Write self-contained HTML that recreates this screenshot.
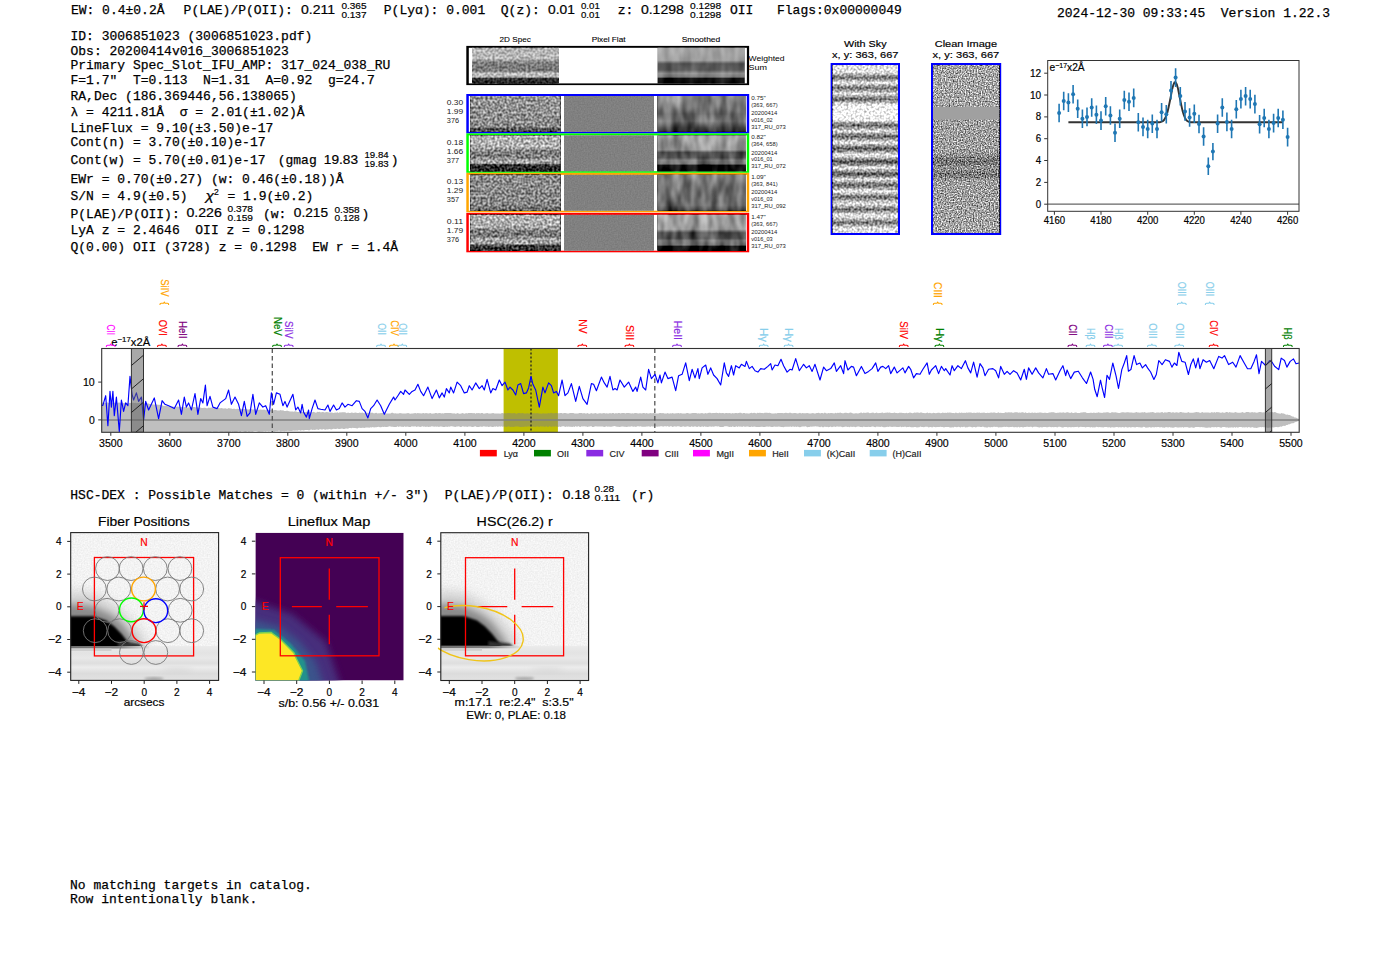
<!DOCTYPE html><html><head><meta charset="utf-8"><style>html,body{margin:0;padding:0;background:#fff;width:1400px;height:953px;overflow:hidden}svg{display:block} text{white-space:pre}</style></head><body>
<svg xml:space="preserve" width="1400" height="953" viewBox="0 0 1400 953">
<rect width="1400" height="953" fill="#fff"/>
<text x="70.9" y="14.0" font-family="'Liberation Mono', monospace" font-size="13.6" fill="#000" textLength="93.6" lengthAdjust="spacingAndGlyphs"  stroke="#000" stroke-width="0.25">EW: 0.4±0.2Å</text>
<text x="183.6" y="14.0" font-family="'Liberation Mono', monospace" font-size="13.6" fill="#000" textLength="109.2" lengthAdjust="spacingAndGlyphs"  stroke="#000" stroke-width="0.25">P(LAE)/P(OII):</text>
<text x="301.0" y="13.8" font-family="'Liberation Sans', sans-serif" font-size="12.6" fill="#000" text-anchor="start" textLength="34.0" lengthAdjust="spacingAndGlyphs"   stroke="#000" stroke-width="0.2">0.211</text>
<text x="341.4" y="8.7" font-family="'Liberation Sans', sans-serif" font-size="9.2" fill="#000" text-anchor="start" textLength="25.1" lengthAdjust="spacingAndGlyphs"   stroke="#000" stroke-width="0.18">0.365</text>
<text x="341.4" y="17.7" font-family="'Liberation Sans', sans-serif" font-size="9.2" fill="#000" text-anchor="start" textLength="25.1" lengthAdjust="spacingAndGlyphs"   stroke="#000" stroke-width="0.18">0.137</text>
<text x="383.8" y="14.0" font-family="'Liberation Mono', monospace" font-size="13.6" fill="#000" textLength="101.4" lengthAdjust="spacingAndGlyphs"  stroke="#000" stroke-width="0.25">P(Lyα): 0.001</text>
<text x="500.8" y="14.0" font-family="'Liberation Mono', monospace" font-size="13.6" fill="#000" textLength="39.0" lengthAdjust="spacingAndGlyphs"  stroke="#000" stroke-width="0.25">Q(z):</text>
<text x="548.0" y="13.8" font-family="'Liberation Sans', sans-serif" font-size="12.6" fill="#000" text-anchor="start" textLength="26.8" lengthAdjust="spacingAndGlyphs"   stroke="#000" stroke-width="0.2">0.01</text>
<text x="581.0" y="8.7" font-family="'Liberation Sans', sans-serif" font-size="9.2" fill="#000" text-anchor="start" textLength="18.8" lengthAdjust="spacingAndGlyphs"   stroke="#000" stroke-width="0.18">0.01</text>
<text x="581.0" y="17.7" font-family="'Liberation Sans', sans-serif" font-size="9.2" fill="#000" text-anchor="start" textLength="18.8" lengthAdjust="spacingAndGlyphs"   stroke="#000" stroke-width="0.18">0.01</text>
<text x="617.7" y="14.0" font-family="'Liberation Mono', monospace" font-size="13.6" fill="#000" textLength="15.6" lengthAdjust="spacingAndGlyphs"  stroke="#000" stroke-width="0.25">z:</text>
<text x="640.9" y="13.8" font-family="'Liberation Sans', sans-serif" font-size="12.6" fill="#000" text-anchor="start" textLength="42.9" lengthAdjust="spacingAndGlyphs"   stroke="#000" stroke-width="0.2">0.1298</text>
<text x="690.0" y="8.7" font-family="'Liberation Sans', sans-serif" font-size="9.2" fill="#000" text-anchor="start" textLength="31.2" lengthAdjust="spacingAndGlyphs"   stroke="#000" stroke-width="0.18">0.1298</text>
<text x="690.0" y="17.7" font-family="'Liberation Sans', sans-serif" font-size="9.2" fill="#000" text-anchor="start" textLength="31.2" lengthAdjust="spacingAndGlyphs"   stroke="#000" stroke-width="0.18">0.1298</text>
<text x="730.0" y="14.0" font-family="'Liberation Mono', monospace" font-size="13.6" fill="#000" textLength="23.4" lengthAdjust="spacingAndGlyphs"  stroke="#000" stroke-width="0.25">OII</text>
<text x="777.0" y="14.0" font-family="'Liberation Mono', monospace" font-size="13.6" fill="#000" textLength="124.8" lengthAdjust="spacingAndGlyphs"  stroke="#000" stroke-width="0.25">Flags:0x00000049</text>
<text x="1057.0" y="17.0" font-family="'Liberation Mono', monospace" font-size="13.6" fill="#000" textLength="273.0" lengthAdjust="spacingAndGlyphs"  stroke="#000" stroke-width="0.25">2024-12-30 09:33:45  Version 1.22.3</text>
<text x="70.5" y="40.4" font-family="'Liberation Mono', monospace" font-size="13.6" fill="#000" textLength="241.8" lengthAdjust="spacingAndGlyphs"  stroke="#000" stroke-width="0.25">ID: 3006851023 (3006851023.pdf)</text>
<text x="70.5" y="55.0" font-family="'Liberation Mono', monospace" font-size="13.6" fill="#000" textLength="218.4" lengthAdjust="spacingAndGlyphs"  stroke="#000" stroke-width="0.25">Obs: 20200414v016_3006851023</text>
<text x="70.5" y="69.3" font-family="'Liberation Mono', monospace" font-size="13.6" fill="#000" textLength="319.8" lengthAdjust="spacingAndGlyphs"  stroke="#000" stroke-width="0.25">Primary Spec_Slot_IFU_AMP: 317_024_038_RU</text>
<text x="70.5" y="84.3" font-family="'Liberation Mono', monospace" font-size="13.6" fill="#000" textLength="304.2" lengthAdjust="spacingAndGlyphs"  stroke="#000" stroke-width="0.25">F=1.7"  T=0.113  N=1.31  A=0.92  g=24.7</text>
<text x="70.5" y="99.6" font-family="'Liberation Mono', monospace" font-size="13.6" fill="#000" textLength="226.2" lengthAdjust="spacingAndGlyphs"  stroke="#000" stroke-width="0.25">RA,Dec (186.369446,56.138065)</text>
<text x="70.5" y="116.1" font-family="'Liberation Mono', monospace" font-size="13.6" fill="#000" textLength="234.0" lengthAdjust="spacingAndGlyphs"  stroke="#000" stroke-width="0.25">λ = 4211.81Å  σ = 2.01(±1.02)Å</text>
<text x="70.5" y="131.5" font-family="'Liberation Mono', monospace" font-size="13.6" fill="#000" textLength="202.8" lengthAdjust="spacingAndGlyphs"  stroke="#000" stroke-width="0.25">LineFlux = 9.10(±3.50)e-17</text>
<text x="70.5" y="146.2" font-family="'Liberation Mono', monospace" font-size="13.6" fill="#000" textLength="195.0" lengthAdjust="spacingAndGlyphs"  stroke="#000" stroke-width="0.25">Cont(n) = 3.70(±0.10)e-17</text>
<text x="70.5" y="164.1" font-family="'Liberation Mono', monospace" font-size="13.6" fill="#000" textLength="195.0" lengthAdjust="spacingAndGlyphs"  stroke="#000" stroke-width="0.25">Cont(w) = 5.70(±0.01)e-17</text>
<text x="277.7" y="164.1" font-family="'Liberation Mono', monospace" font-size="13.6" fill="#000" textLength="39.0" lengthAdjust="spacingAndGlyphs"  stroke="#000" stroke-width="0.25">(gmag</text>
<text x="323.8" y="163.9" font-family="'Liberation Sans', sans-serif" font-size="12.6" fill="#000" text-anchor="start" textLength="34.2" lengthAdjust="spacingAndGlyphs"   stroke="#000" stroke-width="0.2">19.83</text>
<text x="364.5" y="158.4" font-family="'Liberation Sans', sans-serif" font-size="9.2" fill="#000" text-anchor="start" textLength="24.1" lengthAdjust="spacingAndGlyphs"   stroke="#000" stroke-width="0.18">19.84</text>
<text x="364.5" y="167.0" font-family="'Liberation Sans', sans-serif" font-size="9.2" fill="#000" text-anchor="start" textLength="24.1" lengthAdjust="spacingAndGlyphs"   stroke="#000" stroke-width="0.18">19.83</text>
<text x="390.8" y="164.1" font-family="'Liberation Mono', monospace" font-size="13.6" fill="#000" textLength="7.8" lengthAdjust="spacingAndGlyphs"  stroke="#000" stroke-width="0.25">)</text>
<text x="70.5" y="182.5" font-family="'Liberation Mono', monospace" font-size="13.6" fill="#000" textLength="273.0" lengthAdjust="spacingAndGlyphs"  stroke="#000" stroke-width="0.25">EWr = 0.70(±0.27) (w: 0.46(±0.18))Å</text>
<text x="70.5" y="200.1" font-family="'Liberation Mono', monospace" font-size="13.6" fill="#000" textLength="117.0" lengthAdjust="spacingAndGlyphs"  stroke="#000" stroke-width="0.25">S/N = 4.9(±0.5)</text>
<text x="205.5" y="200.1" font-family="'Liberation Sans', sans-serif" font-size="12.0" fill="#000" text-anchor="start" textLength="8.5" lengthAdjust="spacingAndGlyphs" font-style="italic"  stroke="#000" stroke-width="0.2">χ</text>
<text x="214.0" y="195.2" font-family="'Liberation Sans', sans-serif" font-size="9.2" fill="#000" text-anchor="start" textLength="4.8" lengthAdjust="spacingAndGlyphs"   stroke="#000" stroke-width="0.18">2</text>
<text x="227.5" y="200.1" font-family="'Liberation Mono', monospace" font-size="13.6" fill="#000" textLength="85.8" lengthAdjust="spacingAndGlyphs"  stroke="#000" stroke-width="0.25">= 1.9(±0.2)</text>
<text x="70.5" y="217.7" font-family="'Liberation Mono', monospace" font-size="13.6" fill="#000" textLength="109.2" lengthAdjust="spacingAndGlyphs"  stroke="#000" stroke-width="0.25">P(LAE)/P(OII):</text>
<text x="186.4" y="217.4" font-family="'Liberation Sans', sans-serif" font-size="12.6" fill="#000" text-anchor="start" textLength="35.4" lengthAdjust="spacingAndGlyphs"   stroke="#000" stroke-width="0.2">0.226</text>
<text x="227.6" y="212.0" font-family="'Liberation Sans', sans-serif" font-size="9.2" fill="#000" text-anchor="start" textLength="25.4" lengthAdjust="spacingAndGlyphs"   stroke="#000" stroke-width="0.18">0.378</text>
<text x="227.6" y="220.9" font-family="'Liberation Sans', sans-serif" font-size="9.2" fill="#000" text-anchor="start" textLength="25.4" lengthAdjust="spacingAndGlyphs"   stroke="#000" stroke-width="0.18">0.159</text>
<text x="263.0" y="217.7" font-family="'Liberation Mono', monospace" font-size="13.6" fill="#000" textLength="23.4" lengthAdjust="spacingAndGlyphs"  stroke="#000" stroke-width="0.25">(w:</text>
<text x="293.8" y="217.4" font-family="'Liberation Sans', sans-serif" font-size="12.6" fill="#000" text-anchor="start" textLength="34.2" lengthAdjust="spacingAndGlyphs"   stroke="#000" stroke-width="0.2">0.215</text>
<text x="334.5" y="212.6" font-family="'Liberation Sans', sans-serif" font-size="9.2" fill="#000" text-anchor="start" textLength="25.2" lengthAdjust="spacingAndGlyphs"   stroke="#000" stroke-width="0.18">0.358</text>
<text x="334.5" y="221.2" font-family="'Liberation Sans', sans-serif" font-size="9.2" fill="#000" text-anchor="start" textLength="25.2" lengthAdjust="spacingAndGlyphs"   stroke="#000" stroke-width="0.18">0.128</text>
<text x="361.6" y="217.7" font-family="'Liberation Mono', monospace" font-size="13.6" fill="#000" textLength="7.8" lengthAdjust="spacingAndGlyphs"  stroke="#000" stroke-width="0.25">)</text>
<text x="70.5" y="234.3" font-family="'Liberation Mono', monospace" font-size="13.6" fill="#000" textLength="234.0" lengthAdjust="spacingAndGlyphs"  stroke="#000" stroke-width="0.25">LyA z = 2.4646  OII z = 0.1298</text>
<text x="70.5" y="250.8" font-family="'Liberation Mono', monospace" font-size="13.6" fill="#000" textLength="327.6" lengthAdjust="spacingAndGlyphs"  stroke="#000" stroke-width="0.25">Q(0.00) OII (3728) z = 0.1298  EW r = 1.4Å</text>
<text x="70.3" y="498.9" font-family="'Liberation Mono', monospace" font-size="13.6" fill="#000" textLength="483.6" lengthAdjust="spacingAndGlyphs"  stroke="#000" stroke-width="0.25">HSC-DEX : Possible Matches = 0 (within +/- 3")  P(LAE)/P(OII):</text>
<text x="562.5" y="498.7" font-family="'Liberation Sans', sans-serif" font-size="12.6" fill="#000" text-anchor="start" textLength="27.5" lengthAdjust="spacingAndGlyphs"   stroke="#000" stroke-width="0.2">0.18</text>
<text x="594.6" y="492.0" font-family="'Liberation Sans', sans-serif" font-size="9.2" fill="#000" text-anchor="start" textLength="19.5" lengthAdjust="spacingAndGlyphs"   stroke="#000" stroke-width="0.18">0.28</text>
<text x="594.6" y="501.0" font-family="'Liberation Sans', sans-serif" font-size="9.2" fill="#000" text-anchor="start" textLength="25.7" lengthAdjust="spacingAndGlyphs"   stroke="#000" stroke-width="0.18">0.111</text>
<text x="631.0" y="498.9" font-family="'Liberation Mono', monospace" font-size="13.6" fill="#000" textLength="23.4" lengthAdjust="spacingAndGlyphs"  stroke="#000" stroke-width="0.25">(r)</text>
<text x="70.0" y="888.6" font-family="'Liberation Mono', monospace" font-size="13.6" fill="#000" textLength="241.8" lengthAdjust="spacingAndGlyphs"  stroke="#000" stroke-width="0.25">No matching targets in catalog.</text>
<text x="70.0" y="903.4" font-family="'Liberation Mono', monospace" font-size="13.6" fill="#000" textLength="187.2" lengthAdjust="spacingAndGlyphs"  stroke="#000" stroke-width="0.25">Row intentionally blank.</text>
<clipPath id="cpS"><rect x="101.7" y="348.5" width="1197.5" height="83.80000000000001"/></clipPath>
<g clip-path="url(#cpS)">
<rect x="503.6" y="348.5" width="54.299999999999955" height="83.80000000000001" fill="#bfbf00"/>
<path d="M99.0,402.7 L100.2,402.5 L101.4,402.7 L102.5,402.5 L103.7,402.5 L104.9,403.0 L106.1,403.1 L107.3,402.3 L108.4,402.9 L109.6,402.9 L110.8,402.3 L112.0,402.7 L113.2,402.4 L114.3,402.8 L115.5,402.7 L116.7,403.1 L117.9,402.7 L119.1,402.5 L120.2,402.8 L121.4,402.7 L122.6,402.7 L123.8,403.3 L125.0,402.7 L126.1,402.9 L127.3,403.1 L128.5,403.4 L129.7,402.7 L130.9,403.0 L132.0,402.8 L133.2,402.7 L134.4,402.9 L135.6,402.7 L136.8,403.2 L137.9,402.9 L139.1,403.2 L140.3,402.8 L141.5,402.8 L142.7,403.6 L143.8,403.6 L145.0,403.5 L146.2,402.8 L147.4,403.5 L148.6,403.5 L149.7,404.0 L150.9,403.9 L152.1,404.2 L153.3,404.4 L154.5,404.4 L155.6,404.6 L156.8,404.4 L158.0,404.8 L159.2,404.7 L160.4,405.0 L161.5,405.0 L162.7,405.5 L163.9,406.1 L165.1,405.7 L166.3,405.7 L167.4,406.0 L168.6,406.4 L169.8,406.5 L171.0,407.0 L172.2,406.4 L173.4,406.7 L174.5,407.0 L175.7,407.3 L176.9,406.6 L178.1,406.5 L179.3,407.3 L180.4,406.7 L181.6,407.1 L182.8,407.4 L184.0,407.3 L185.2,406.9 L186.3,406.9 L187.5,407.7 L188.7,407.2 L189.9,407.7 L191.1,407.2 L192.2,407.5 L193.4,407.1 L194.6,407.0 L195.8,407.5 L197.0,407.1 L198.1,407.7 L199.3,408.0 L200.5,407.6 L201.7,408.1 L202.9,408.0 L204.0,407.8 L205.2,407.7 L206.4,408.2 L207.6,408.3 L208.8,407.6 L209.9,408.1 L211.1,407.6 L212.3,407.7 L213.5,408.2 L214.7,408.1 L215.8,408.1 L217.0,408.1 L218.2,408.1 L219.4,408.2 L220.6,408.2 L221.7,407.9 L222.9,408.4 L224.1,408.5 L225.3,408.2 L226.5,408.7 L227.6,408.7 L228.8,408.1 L230.0,408.6 L231.2,408.6 L232.4,409.1 L233.5,408.8 L234.7,408.7 L235.9,409.2 L237.1,408.7 L238.3,408.7 L239.4,409.3 L240.6,408.8 L241.8,409.0 L243.0,408.9 L244.2,409.2 L245.3,408.9 L246.5,408.9 L247.7,409.6 L248.9,409.6 L250.1,409.1 L251.2,408.9 L252.4,409.5 L253.6,409.4 L254.8,409.3 L256.0,409.6 L257.1,409.6 L258.3,409.7 L259.5,409.7 L260.7,409.5 L261.9,409.8 L263.0,409.8 L264.2,409.4 L265.4,410.2 L266.6,409.7 L267.8,409.6 L268.9,410.0 L270.1,410.1 L271.3,409.6 L272.5,410.2 L273.7,410.3 L274.8,410.1 L276.0,409.9 L277.2,410.5 L278.4,410.4 L279.6,410.5 L280.7,410.1 L281.9,410.6 L283.1,410.3 L284.3,411.0 L285.5,411.0 L286.6,410.8 L287.8,410.7 L289.0,411.2 L290.2,411.5 L291.4,411.6 L292.6,411.4 L293.7,411.8 L294.9,411.3 L296.1,411.4 L297.3,412.1 L298.5,412.1 L299.6,411.7 L300.8,411.9 L302.0,411.7 L303.2,412.2 L304.4,412.4 L305.5,412.2 L306.7,411.8 L307.9,412.3 L309.1,412.3 L310.3,412.2 L311.4,412.2 L312.6,412.3 L313.8,411.8 L315.0,412.5 L316.2,412.7 L317.3,411.8 L318.5,411.9 L319.7,411.8 L320.9,412.4 L322.1,411.9 L323.2,412.0 L324.4,412.6 L325.6,412.2 L326.8,412.1 L328.0,412.3 L329.1,412.4 L330.3,412.6 L331.5,412.6 L332.7,412.7 L333.9,412.9 L335.0,412.4 L336.2,412.7 L337.4,412.3 L338.6,413.0 L339.8,412.2 L340.9,412.4 L342.1,412.3 L343.3,412.3 L344.5,412.3 L345.7,412.6 L346.8,413.2 L348.0,412.5 L349.2,413.0 L350.4,412.9 L351.6,412.6 L352.7,412.8 L353.9,412.9 L355.1,412.4 L356.3,412.7 L357.5,413.0 L358.6,413.1 L359.8,412.5 L361.0,412.9 L362.2,412.6 L363.4,413.0 L364.5,413.2 L365.7,412.9 L366.9,412.6 L368.1,413.2 L369.3,412.7 L370.4,412.6 L371.6,412.7 L372.8,412.7 L374.0,413.4 L375.2,412.9 L376.3,412.7 L377.5,413.4 L378.7,413.2 L379.9,413.2 L381.1,413.0 L382.2,413.1 L383.4,413.1 L384.6,412.8 L385.8,413.5 L387.0,413.5 L388.1,413.5 L389.3,413.5 L390.5,413.5 L391.7,412.7 L392.9,412.8 L394.0,413.5 L395.2,413.2 L396.4,413.4 L397.6,413.4 L398.8,413.4 L399.9,413.1 L401.1,413.2 L402.3,413.4 L403.5,413.5 L404.7,413.4 L405.8,413.6 L407.0,413.2 L408.2,413.1 L409.4,413.4 L410.6,413.7 L411.8,413.6 L412.9,413.4 L414.1,413.2 L415.3,413.0 L416.5,413.4 L417.7,413.0 L418.8,413.2 L420.0,413.3 L421.2,413.4 L422.4,413.3 L423.6,413.1 L424.7,413.4 L425.9,413.1 L427.1,413.3 L428.3,413.5 L429.5,413.3 L430.6,413.1 L431.8,413.7 L433.0,413.4 L434.2,413.4 L435.4,412.9 L436.5,412.9 L437.7,413.4 L438.9,412.9 L440.1,413.0 L441.3,413.5 L442.4,413.3 L443.6,413.6 L444.8,413.0 L446.0,413.1 L447.2,412.9 L448.3,413.0 L449.5,413.1 L450.7,413.1 L451.9,413.2 L453.1,413.6 L454.2,413.2 L455.4,413.7 L456.6,413.6 L457.8,413.0 L459.0,413.7 L460.1,413.7 L461.3,413.6 L462.5,412.9 L463.7,413.6 L464.9,413.7 L466.0,413.0 L467.2,413.6 L468.4,413.0 L469.6,413.1 L470.8,413.0 L471.9,412.9 L473.1,413.2 L474.3,413.0 L475.5,413.7 L476.7,413.0 L477.8,413.3 L479.0,413.1 L480.2,413.6 L481.4,413.1 L482.6,412.9 L483.7,413.7 L484.9,413.4 L486.1,413.2 L487.3,413.0 L488.5,413.5 L489.6,413.6 L490.8,413.5 L492.0,413.2 L493.2,413.1 L494.4,413.4 L495.5,413.4 L496.7,413.4 L497.9,413.4 L499.1,413.4 L500.3,413.7 L501.4,413.3 L502.6,412.9 L503.8,413.4 L505.0,413.1 L506.2,413.6 L507.3,413.1 L508.5,413.1 L509.7,413.1 L510.9,413.3 L512.1,413.3 L513.2,413.2 L514.4,412.9 L515.6,413.6 L516.8,413.7 L518.0,413.1 L519.1,412.9 L520.3,413.3 L521.5,413.3 L522.7,413.1 L523.9,413.6 L525.1,413.5 L526.2,413.6 L527.4,413.2 L528.6,413.5 L529.8,413.5 L531.0,413.1 L532.1,412.9 L533.3,413.5 L534.5,413.1 L535.7,413.4 L536.9,413.0 L538.0,413.2 L539.2,413.5 L540.4,413.5 L541.6,413.7 L542.8,413.3 L543.9,413.4 L545.1,413.6 L546.3,413.4 L547.5,413.4 L548.7,413.0 L549.8,413.6 L551.0,412.8 L552.2,413.3 L553.4,413.2 L554.6,413.3 L555.7,413.0 L556.9,413.0 L558.1,413.2 L559.3,413.3 L560.5,413.1 L561.6,413.0 L562.8,413.4 L564.0,413.1 L565.2,412.9 L566.4,413.3 L567.5,413.5 L568.7,413.5 L569.9,413.1 L571.1,413.1 L572.3,412.9 L573.4,413.0 L574.6,413.5 L575.8,413.6 L577.0,413.5 L578.2,413.6 L579.3,413.1 L580.5,413.0 L581.7,412.9 L582.9,413.5 L584.1,413.0 L585.2,413.5 L586.4,413.4 L587.6,413.1 L588.8,413.7 L590.0,413.7 L591.1,413.0 L592.3,413.5 L593.5,413.4 L594.7,413.2 L595.9,413.1 L597.0,413.7 L598.2,413.4 L599.4,413.3 L600.6,413.3 L601.8,413.5 L602.9,413.2 L604.1,412.9 L605.3,413.4 L606.5,413.2 L607.7,413.6 L608.8,413.5 L610.0,413.1 L611.2,413.6 L612.4,412.9 L613.6,412.9 L614.7,413.7 L615.9,412.9 L617.1,413.4 L618.3,413.0 L619.5,413.1 L620.6,413.5 L621.8,413.1 L623.0,413.1 L624.2,413.0 L625.4,413.5 L626.5,413.1 L627.7,412.9 L628.9,413.1 L630.1,413.3 L631.3,413.6 L632.4,413.3 L633.6,413.4 L634.8,413.1 L636.0,413.1 L637.2,413.2 L638.3,413.6 L639.5,413.2 L640.7,413.2 L641.9,413.6 L643.1,412.9 L644.3,413.1 L645.4,413.6 L646.6,412.9 L647.8,413.6 L649.0,413.4 L650.2,413.1 L651.3,413.2 L652.5,413.2 L653.7,413.1 L654.9,413.3 L656.1,413.4 L657.2,413.6 L658.4,413.6 L659.6,413.1 L660.8,413.0 L662.0,413.2 L663.1,413.0 L664.3,413.4 L665.5,413.5 L666.7,413.4 L667.9,412.9 L669.0,413.7 L670.2,413.2 L671.4,413.5 L672.6,413.0 L673.8,413.4 L674.9,413.4 L676.1,413.3 L677.3,413.2 L678.5,413.0 L679.7,413.4 L680.8,412.9 L682.0,413.6 L683.2,413.4 L684.4,413.6 L685.6,413.6 L686.7,413.0 L687.9,413.0 L689.1,413.5 L690.3,413.5 L691.5,413.3 L692.6,413.0 L693.8,412.9 L695.0,413.0 L696.2,413.1 L697.4,413.5 L698.5,413.3 L699.7,413.5 L700.9,413.2 L702.1,413.1 L703.3,413.5 L704.4,413.4 L705.6,412.9 L706.8,413.6 L708.0,412.9 L709.2,412.8 L710.3,412.8 L711.5,413.3 L712.7,413.1 L713.9,413.1 L715.1,413.0 L716.2,412.7 L717.4,413.0 L718.6,413.3 L719.8,412.8 L721.0,413.2 L722.1,413.1 L723.3,412.9 L724.5,413.6 L725.7,412.9 L726.9,413.0 L728.0,413.2 L729.2,413.1 L730.4,413.2 L731.6,413.4 L732.8,413.1 L733.9,413.6 L735.1,413.1 L736.3,413.0 L737.5,413.2 L738.7,413.1 L739.8,412.7 L741.0,412.8 L742.2,413.5 L743.4,412.9 L744.6,413.0 L745.7,413.5 L746.9,413.2 L748.1,413.4 L749.3,413.5 L750.5,413.1 L751.6,412.7 L752.8,413.3 L754.0,412.8 L755.2,412.9 L756.4,413.4 L757.5,412.8 L758.7,413.0 L759.9,412.7 L761.1,412.9 L762.3,412.9 L763.5,413.2 L764.6,412.8 L765.8,412.7 L767.0,412.8 L768.2,413.1 L769.4,412.8 L770.5,413.1 L771.7,413.4 L772.9,413.5 L774.1,413.5 L775.3,413.3 L776.4,413.4 L777.6,413.1 L778.8,412.9 L780.0,413.0 L781.2,413.1 L782.3,412.9 L783.5,413.2 L784.7,413.1 L785.9,412.8 L787.1,413.1 L788.2,413.3 L789.4,412.7 L790.6,412.8 L791.8,413.2 L793.0,413.2 L794.1,413.0 L795.3,413.0 L796.5,413.3 L797.7,413.5 L798.9,413.3 L800.0,412.8 L801.2,413.4 L802.4,413.1 L803.6,413.3 L804.8,413.3 L805.9,413.3 L807.1,413.1 L808.3,413.3 L809.5,413.4 L810.7,413.4 L811.8,413.3 L813.0,413.0 L814.2,413.4 L815.4,413.4 L816.6,413.1 L817.7,413.1 L818.9,412.8 L820.1,413.4 L821.3,413.1 L822.5,413.1 L823.6,413.4 L824.8,412.6 L826.0,413.2 L827.2,413.4 L828.4,413.0 L829.5,413.3 L830.7,412.9 L831.9,413.1 L833.1,413.3 L834.3,413.4 L835.4,412.8 L836.6,413.2 L837.8,412.7 L839.0,413.0 L840.2,412.6 L841.3,413.1 L842.5,413.2 L843.7,413.2 L844.9,412.7 L846.1,412.8 L847.2,413.1 L848.4,413.3 L849.6,412.8 L850.8,412.5 L852.0,412.9 L853.1,413.4 L854.3,413.4 L855.5,413.3 L856.7,413.2 L857.9,413.4 L859.0,413.3 L860.2,412.8 L861.4,412.6 L862.6,413.2 L863.8,412.5 L864.9,412.9 L866.1,412.7 L867.3,412.5 L868.5,412.5 L869.7,413.3 L870.8,413.1 L872.0,412.8 L873.2,412.5 L874.4,413.3 L875.6,413.1 L876.7,412.6 L877.9,413.3 L879.1,413.0 L880.3,413.1 L881.5,412.7 L882.7,412.5 L883.8,413.2 L885.0,412.7 L886.2,412.7 L887.4,412.6 L888.6,412.8 L889.7,412.5 L890.9,413.0 L892.1,413.0 L893.3,413.1 L894.5,412.6 L895.6,412.9 L896.8,413.1 L898.0,413.2 L899.2,412.7 L900.4,412.8 L901.5,412.7 L902.7,413.0 L903.9,412.9 L905.1,413.2 L906.3,412.7 L907.4,413.3 L908.6,412.9 L909.8,412.6 L911.0,412.7 L912.2,413.2 L913.3,413.1 L914.5,412.5 L915.7,412.7 L916.9,412.5 L918.1,412.5 L919.2,412.9 L920.4,412.5 L921.6,412.6 L922.8,413.0 L924.0,413.0 L925.1,413.2 L926.3,412.9 L927.5,412.4 L928.7,413.2 L929.9,412.8 L931.0,413.2 L932.2,413.2 L933.4,412.7 L934.6,413.1 L935.8,413.2 L936.9,413.1 L938.1,412.7 L939.3,412.7 L940.5,413.2 L941.7,413.0 L942.8,412.4 L944.0,413.1 L945.2,412.7 L946.4,412.9 L947.6,412.5 L948.7,412.7 L949.9,412.5 L951.1,412.8 L952.3,413.1 L953.5,413.1 L954.6,413.2 L955.8,412.5 L957.0,413.1 L958.2,413.2 L959.4,412.4 L960.5,413.0 L961.7,412.4 L962.9,413.1 L964.1,412.8 L965.3,413.0 L966.4,412.5 L967.6,412.7 L968.8,412.6 L970.0,412.5 L971.2,412.4 L972.3,412.9 L973.5,412.7 L974.7,412.8 L975.9,413.1 L977.1,412.4 L978.2,412.7 L979.4,412.5 L980.6,413.0 L981.8,412.7 L983.0,412.8 L984.1,412.5 L985.3,413.1 L986.5,412.9 L987.7,412.7 L988.9,413.1 L990.0,412.7 L991.2,412.5 L992.4,412.8 L993.6,412.6 L994.8,412.6 L995.9,413.0 L997.1,412.9 L998.3,412.3 L999.5,412.9 L1000.7,412.8 L1001.9,413.1 L1003.0,413.0 L1004.2,413.0 L1005.4,412.3 L1006.6,412.5 L1007.8,412.4 L1008.9,412.3 L1010.1,412.6 L1011.3,412.3 L1012.5,412.7 L1013.7,412.8 L1014.8,412.3 L1016.0,412.3 L1017.2,412.3 L1018.4,412.7 L1019.6,412.4 L1020.7,412.8 L1021.9,412.2 L1023.1,412.3 L1024.3,412.9 L1025.5,412.3 L1026.6,413.0 L1027.8,413.0 L1029.0,412.5 L1030.2,412.9 L1031.4,412.7 L1032.5,412.5 L1033.7,413.1 L1034.9,412.4 L1036.1,412.9 L1037.3,412.7 L1038.4,412.8 L1039.6,412.4 L1040.8,412.4 L1042.0,412.8 L1043.2,413.0 L1044.3,412.8 L1045.5,412.7 L1046.7,413.0 L1047.9,413.0 L1049.1,412.4 L1050.2,412.5 L1051.4,412.2 L1052.6,412.2 L1053.8,412.3 L1055.0,412.8 L1056.1,412.9 L1057.3,412.8 L1058.5,412.7 L1059.7,412.6 L1060.9,412.6 L1062.0,412.8 L1063.2,412.3 L1064.4,412.8 L1065.6,412.7 L1066.8,412.3 L1067.9,412.3 L1069.1,412.8 L1070.3,412.9 L1071.5,412.3 L1072.7,413.1 L1073.8,412.9 L1075.0,412.6 L1076.2,412.6 L1077.4,412.9 L1078.6,413.0 L1079.7,412.9 L1080.9,412.4 L1082.1,412.6 L1083.3,412.2 L1084.5,412.3 L1085.6,412.2 L1086.8,413.0 L1088.0,412.9 L1089.2,413.0 L1090.4,412.7 L1091.5,412.7 L1092.7,413.0 L1093.9,412.5 L1095.1,413.0 L1096.3,412.8 L1097.4,412.8 L1098.6,412.3 L1099.8,412.7 L1101.0,412.8 L1102.2,413.0 L1103.3,412.6 L1104.5,412.5 L1105.7,412.4 L1106.9,412.2 L1108.1,412.3 L1109.2,412.8 L1110.4,412.9 L1111.6,412.3 L1112.8,412.3 L1114.0,412.5 L1115.2,412.3 L1116.3,412.5 L1117.5,412.8 L1118.7,412.9 L1119.9,413.0 L1121.1,412.4 L1122.2,412.2 L1123.4,412.2 L1124.6,412.6 L1125.8,412.4 L1127.0,412.2 L1128.1,412.3 L1129.3,412.4 L1130.5,412.6 L1131.7,412.5 L1132.9,412.8 L1134.0,412.8 L1135.2,412.4 L1136.4,412.1 L1137.6,412.5 L1138.8,412.6 L1139.9,412.7 L1141.1,412.6 L1142.3,412.2 L1143.5,412.6 L1144.7,412.1 L1145.8,412.8 L1147.0,412.7 L1148.2,412.5 L1149.4,412.6 L1150.6,412.2 L1151.7,412.2 L1152.9,412.1 L1154.1,412.4 L1155.3,412.9 L1156.5,412.4 L1157.6,412.5 L1158.8,412.5 L1160.0,412.7 L1161.2,412.3 L1162.4,412.1 L1163.5,412.9 L1164.7,412.3 L1165.9,412.6 L1167.1,412.5 L1168.3,412.1 L1169.4,412.1 L1170.6,412.3 L1171.8,412.8 L1173.0,412.1 L1174.2,412.8 L1175.3,412.6 L1176.5,412.2 L1177.7,412.6 L1178.9,412.7 L1180.1,412.1 L1181.2,412.1 L1182.4,412.6 L1183.6,412.6 L1184.8,412.7 L1186.0,412.8 L1187.1,412.7 L1188.3,412.0 L1189.5,412.8 L1190.7,412.7 L1191.9,412.7 L1193.0,412.8 L1194.2,412.4 L1195.4,412.2 L1196.6,412.1 L1197.8,412.3 L1198.9,412.2 L1200.1,412.9 L1201.3,412.6 L1202.5,412.0 L1203.7,412.8 L1204.8,412.6 L1206.0,412.4 L1207.2,412.6 L1208.4,412.4 L1209.6,412.8 L1210.7,412.7 L1211.9,412.0 L1213.1,412.7 L1214.3,412.1 L1215.5,412.7 L1216.6,412.0 L1217.8,412.3 L1219.0,412.3 L1220.2,412.7 L1221.4,412.8 L1222.5,412.2 L1223.7,412.7 L1224.9,412.7 L1226.1,412.1 L1227.3,412.1 L1228.4,412.8 L1229.6,412.0 L1230.8,412.4 L1232.0,412.5 L1233.2,412.8 L1234.4,412.5 L1235.5,411.9 L1236.7,412.6 L1237.9,412.7 L1239.1,412.7 L1240.3,412.7 L1241.4,412.5 L1242.6,412.0 L1243.8,412.8 L1245.0,412.7 L1246.2,412.0 L1247.3,411.9 L1248.5,411.9 L1249.7,412.6 L1250.9,412.5 L1252.1,412.0 L1253.2,412.4 L1254.4,412.2 L1255.6,412.5 L1256.8,412.8 L1258.0,412.5 L1259.1,412.1 L1260.3,412.1 L1261.5,412.3 L1262.7,412.4 L1263.9,412.3 L1265.0,412.4 L1266.2,412.3 L1267.4,412.0 L1268.6,412.6 L1269.8,412.3 L1270.9,412.0 L1272.1,412.0 L1273.3,412.6 L1274.5,412.1 L1275.7,412.3 L1276.8,413.1 L1278.0,413.2 L1279.2,413.4 L1280.4,413.7 L1281.6,413.0 L1282.7,413.6 L1283.9,413.4 L1285.1,414.2 L1286.3,414.7 L1287.5,414.4 L1288.6,414.9 L1289.8,415.1 L1291.0,415.8 L1292.2,416.4 L1293.4,416.6 L1294.5,417.6 L1295.7,417.6 L1296.9,418.1 L1298.1,418.8 L1299.3,418.8 L1300.4,419.3 L1300.4,420.4 L1299.3,420.5 L1298.1,421.1 L1296.9,421.7 L1295.7,422.1 L1294.5,422.5 L1293.4,423.3 L1292.2,423.2 L1291.0,423.6 L1289.8,424.2 L1288.6,424.3 L1287.5,425.0 L1286.3,425.1 L1285.1,426.0 L1283.9,425.7 L1282.7,426.1 L1281.6,426.7 L1280.4,426.4 L1279.2,426.9 L1278.0,427.2 L1276.8,426.9 L1275.7,427.1 L1274.5,427.2 L1273.3,427.6 L1272.1,427.2 L1270.9,427.7 L1269.8,427.4 L1268.6,427.8 L1267.4,427.7 L1266.2,427.6 L1265.0,427.3 L1263.9,427.2 L1262.7,427.1 L1261.5,427.3 L1260.3,427.0 L1259.1,427.3 L1258.0,427.6 L1256.8,427.9 L1255.6,427.7 L1254.4,427.8 L1253.2,427.6 L1252.1,427.0 L1250.9,427.8 L1249.7,427.3 L1248.5,427.1 L1247.3,427.8 L1246.2,427.1 L1245.0,427.6 L1243.8,427.2 L1242.6,427.4 L1241.4,427.0 L1240.3,427.1 L1239.1,427.1 L1237.9,427.7 L1236.7,427.0 L1235.5,427.8 L1234.4,427.0 L1233.2,427.8 L1232.0,427.2 L1230.8,427.5 L1229.6,427.6 L1228.4,427.7 L1227.3,427.3 L1226.1,427.5 L1224.9,427.1 L1223.7,427.0 L1222.5,427.1 L1221.4,427.7 L1220.2,427.6 L1219.0,427.0 L1217.8,427.0 L1216.6,427.6 L1215.5,427.0 L1214.3,427.2 L1213.1,427.3 L1211.9,426.9 L1210.7,427.7 L1209.6,427.4 L1208.4,427.6 L1207.2,427.7 L1206.0,427.8 L1204.8,427.4 L1203.7,427.3 L1202.5,427.2 L1201.3,427.0 L1200.1,427.3 L1198.9,427.1 L1197.8,427.0 L1196.6,427.0 L1195.4,427.1 L1194.2,427.7 L1193.0,427.8 L1191.9,427.2 L1190.7,427.6 L1189.5,427.7 L1188.3,427.5 L1187.1,427.1 L1186.0,427.2 L1184.8,427.0 L1183.6,427.7 L1182.4,427.0 L1181.2,427.5 L1180.1,427.2 L1178.9,427.6 L1177.7,427.6 L1176.5,427.3 L1175.3,427.0 L1174.2,427.5 L1173.0,427.7 L1171.8,427.4 L1170.6,427.6 L1169.4,427.0 L1168.3,427.5 L1167.1,427.3 L1165.9,427.1 L1164.7,427.7 L1163.5,427.6 L1162.4,427.4 L1161.2,427.0 L1160.0,427.6 L1158.8,427.0 L1157.6,426.9 L1156.5,427.3 L1155.3,426.9 L1154.1,427.6 L1152.9,427.1 L1151.7,427.6 L1150.6,427.6 L1149.4,427.0 L1148.2,427.5 L1147.0,427.6 L1145.8,427.7 L1144.7,426.9 L1143.5,426.8 L1142.3,427.4 L1141.1,427.4 L1139.9,427.2 L1138.8,427.2 L1137.6,427.0 L1136.4,427.0 L1135.2,427.4 L1134.0,427.2 L1132.9,426.9 L1131.7,427.2 L1130.5,427.6 L1129.3,427.0 L1128.1,427.5 L1127.0,427.6 L1125.8,426.8 L1124.6,427.6 L1123.4,427.3 L1122.2,426.9 L1121.1,427.4 L1119.9,427.0 L1118.7,427.4 L1117.5,427.1 L1116.3,426.9 L1115.2,427.3 L1114.0,427.6 L1112.8,427.3 L1111.6,427.2 L1110.4,427.7 L1109.2,426.9 L1108.1,427.6 L1106.9,427.0 L1105.7,427.0 L1104.5,426.9 L1103.3,427.5 L1102.2,427.2 L1101.0,427.3 L1099.8,427.0 L1098.6,427.2 L1097.4,426.9 L1096.3,426.8 L1095.1,427.4 L1093.9,427.2 L1092.7,427.6 L1091.5,427.1 L1090.4,427.4 L1089.2,427.1 L1088.0,427.1 L1086.8,426.9 L1085.6,427.6 L1084.5,426.9 L1083.3,427.1 L1082.1,427.1 L1080.9,426.8 L1079.7,427.1 L1078.6,427.5 L1077.4,426.8 L1076.2,427.0 L1075.0,427.1 L1073.8,427.2 L1072.7,427.1 L1071.5,427.3 L1070.3,427.2 L1069.1,427.0 L1067.9,427.4 L1066.8,427.0 L1065.6,426.9 L1064.4,427.0 L1063.2,427.5 L1062.0,427.4 L1060.9,426.9 L1059.7,426.8 L1058.5,426.7 L1057.3,427.4 L1056.1,427.1 L1055.0,427.0 L1053.8,427.2 L1052.6,427.1 L1051.4,427.3 L1050.2,427.0 L1049.1,426.8 L1047.9,427.3 L1046.7,427.3 L1045.5,426.9 L1044.3,427.1 L1043.2,426.9 L1042.0,427.4 L1040.8,427.0 L1039.6,427.4 L1038.4,427.2 L1037.3,426.9 L1036.1,426.7 L1034.9,426.8 L1033.7,426.8 L1032.5,427.4 L1031.4,426.8 L1030.2,426.8 L1029.0,427.0 L1027.8,426.8 L1026.6,426.7 L1025.5,427.1 L1024.3,427.1 L1023.1,427.4 L1021.9,427.1 L1020.7,427.0 L1019.6,427.6 L1018.4,426.8 L1017.2,427.4 L1016.0,427.0 L1014.8,427.2 L1013.7,427.2 L1012.5,426.8 L1011.3,426.9 L1010.1,427.1 L1008.9,427.2 L1007.8,426.9 L1006.6,426.7 L1005.4,426.9 L1004.2,426.7 L1003.0,426.9 L1001.9,427.2 L1000.7,427.2 L999.5,427.3 L998.3,427.5 L997.1,426.8 L995.9,426.9 L994.8,426.8 L993.6,426.7 L992.4,427.2 L991.2,426.9 L990.0,427.4 L988.9,426.8 L987.7,427.4 L986.5,427.4 L985.3,427.2 L984.1,427.3 L983.0,426.6 L981.8,427.0 L980.6,426.9 L979.4,426.7 L978.2,426.7 L977.1,426.7 L975.9,427.5 L974.7,426.9 L973.5,427.1 L972.3,427.4 L971.2,427.0 L970.0,426.8 L968.8,426.7 L967.6,427.3 L966.4,427.2 L965.3,427.4 L964.1,426.6 L962.9,427.3 L961.7,426.8 L960.5,427.4 L959.4,426.9 L958.2,426.8 L957.0,427.3 L955.8,426.9 L954.6,426.7 L953.5,427.4 L952.3,427.3 L951.1,427.4 L949.9,427.5 L948.7,427.1 L947.6,427.0 L946.4,427.1 L945.2,427.0 L944.0,427.4 L942.8,427.1 L941.7,427.0 L940.5,426.7 L939.3,427.0 L938.1,426.9 L936.9,426.9 L935.8,427.2 L934.6,427.1 L933.4,426.7 L932.2,427.4 L931.0,427.0 L929.9,427.0 L928.7,427.4 L927.5,426.8 L926.3,426.7 L925.1,426.8 L924.0,427.2 L922.8,426.9 L921.6,427.0 L920.4,426.5 L919.2,427.2 L918.1,427.2 L916.9,427.4 L915.7,426.9 L914.5,426.9 L913.3,427.3 L912.2,427.2 L911.0,427.2 L909.8,426.8 L908.6,427.0 L907.4,427.0 L906.3,427.3 L905.1,426.6 L903.9,427.1 L902.7,426.7 L901.5,427.2 L900.4,426.6 L899.2,426.9 L898.0,426.9 L896.8,426.9 L895.6,426.8 L894.5,426.8 L893.3,426.8 L892.1,427.0 L890.9,426.8 L889.7,426.5 L888.6,427.0 L887.4,426.8 L886.2,427.0 L885.0,427.3 L883.8,427.2 L882.7,427.0 L881.5,426.5 L880.3,427.0 L879.1,426.8 L877.9,426.7 L876.7,426.5 L875.6,427.3 L874.4,427.1 L873.2,426.6 L872.0,426.6 L870.8,427.0 L869.7,427.0 L868.5,426.7 L867.3,426.9 L866.1,427.0 L864.9,426.9 L863.8,426.5 L862.6,427.2 L861.4,427.1 L860.2,427.1 L859.0,426.5 L857.9,426.6 L856.7,426.7 L855.5,427.2 L854.3,426.7 L853.1,426.8 L852.0,426.9 L850.8,426.5 L849.6,427.2 L848.4,426.8 L847.2,427.1 L846.1,426.4 L844.9,426.8 L843.7,427.1 L842.5,427.3 L841.3,426.7 L840.2,426.6 L839.0,426.7 L837.8,426.6 L836.6,426.6 L835.4,427.1 L834.3,426.4 L833.1,426.8 L831.9,427.2 L830.7,426.6 L829.5,427.1 L828.4,427.2 L827.2,426.7 L826.0,427.0 L824.8,426.5 L823.6,427.2 L822.5,427.2 L821.3,426.4 L820.1,427.2 L818.9,426.8 L817.7,426.5 L816.6,426.6 L815.4,426.3 L814.2,426.5 L813.0,426.6 L811.8,426.8 L810.7,426.6 L809.5,427.1 L808.3,426.9 L807.1,427.2 L805.9,426.3 L804.8,426.4 L803.6,426.5 L802.4,426.5 L801.2,426.7 L800.0,427.2 L798.9,427.0 L797.7,426.5 L796.5,427.1 L795.3,426.4 L794.1,427.1 L793.0,426.3 L791.8,427.0 L790.6,426.6 L789.4,426.8 L788.2,426.8 L787.1,426.8 L785.9,426.8 L784.7,426.7 L783.5,427.2 L782.3,426.9 L781.2,426.9 L780.0,426.8 L778.8,426.4 L777.6,426.7 L776.4,426.8 L775.3,426.7 L774.1,426.4 L772.9,427.0 L771.7,427.1 L770.5,426.7 L769.4,426.5 L768.2,426.8 L767.0,426.5 L765.8,426.7 L764.6,426.9 L763.5,426.9 L762.3,426.8 L761.1,426.7 L759.9,426.9 L758.7,427.1 L757.5,426.9 L756.4,427.0 L755.2,426.8 L754.0,426.4 L752.8,427.1 L751.6,426.6 L750.5,427.0 L749.3,426.9 L748.1,426.6 L746.9,426.5 L745.7,426.8 L744.6,426.8 L743.4,426.3 L742.2,427.0 L741.0,426.5 L739.8,426.8 L738.7,426.3 L737.5,426.9 L736.3,426.3 L735.1,426.9 L733.9,426.9 L732.8,426.3 L731.6,427.1 L730.4,426.7 L729.2,427.0 L728.0,426.6 L726.9,426.3 L725.7,426.3 L724.5,426.2 L723.3,427.0 L722.1,426.9 L721.0,426.9 L719.8,427.0 L718.6,426.3 L717.4,426.4 L716.2,426.2 L715.1,426.3 L713.9,426.8 L712.7,426.6 L711.5,426.7 L710.3,426.6 L709.2,426.6 L708.0,426.9 L706.8,426.8 L705.6,426.8 L704.4,426.3 L703.3,426.9 L702.1,426.2 L700.9,426.9 L699.7,426.8 L698.5,426.3 L697.4,427.0 L696.2,426.8 L695.0,426.2 L693.8,426.7 L692.6,426.8 L691.5,426.2 L690.3,427.0 L689.1,426.8 L687.9,426.2 L686.7,426.6 L685.6,426.8 L684.4,426.7 L683.2,426.3 L682.0,426.8 L680.8,426.9 L679.7,426.6 L678.5,426.2 L677.3,426.2 L676.1,426.8 L674.9,426.2 L673.8,426.5 L672.6,426.9 L671.4,426.2 L670.2,426.3 L669.0,426.9 L667.9,426.1 L666.7,426.4 L665.5,426.3 L664.3,426.2 L663.1,426.8 L662.0,426.2 L660.8,426.3 L659.6,426.4 L658.4,426.6 L657.2,426.8 L656.1,426.6 L654.9,426.5 L653.7,426.6 L652.5,426.6 L651.3,426.3 L650.2,426.9 L649.0,426.3 L647.8,426.4 L646.6,426.4 L645.4,426.8 L644.3,426.8 L643.1,426.8 L641.9,426.7 L640.7,426.3 L639.5,426.6 L638.3,426.3 L637.2,426.3 L636.0,426.9 L634.8,426.6 L633.6,426.7 L632.4,426.5 L631.3,426.2 L630.1,426.7 L628.9,426.5 L627.7,426.8 L626.5,426.9 L625.4,426.8 L624.2,426.8 L623.0,426.4 L621.8,426.5 L620.6,426.8 L619.5,426.9 L618.3,426.7 L617.1,426.8 L615.9,426.6 L614.7,426.1 L613.6,426.3 L612.4,426.4 L611.2,426.7 L610.0,426.8 L608.8,426.6 L607.7,426.8 L606.5,426.3 L605.3,426.7 L604.1,427.0 L602.9,426.5 L601.8,426.6 L600.6,426.6 L599.4,426.5 L598.2,426.4 L597.0,426.6 L595.9,426.2 L594.7,426.4 L593.5,426.9 L592.3,427.0 L591.1,426.1 L590.0,426.5 L588.8,426.4 L587.6,426.9 L586.4,426.4 L585.2,426.5 L584.1,426.3 L582.9,426.5 L581.7,426.3 L580.5,426.9 L579.3,426.8 L578.2,426.1 L577.0,427.0 L575.8,426.1 L574.6,426.9 L573.4,426.5 L572.3,426.9 L571.1,426.7 L569.9,426.7 L568.7,426.6 L567.5,426.7 L566.4,426.4 L565.2,427.0 L564.0,426.2 L562.8,426.2 L561.6,426.4 L560.5,427.0 L559.3,426.6 L558.1,427.0 L556.9,426.7 L555.7,426.2 L554.6,426.8 L553.4,426.6 L552.2,426.6 L551.0,426.9 L549.8,426.1 L548.7,426.7 L547.5,426.9 L546.3,426.1 L545.1,426.9 L543.9,426.6 L542.8,426.5 L541.6,426.5 L540.4,426.2 L539.2,427.0 L538.0,426.6 L536.9,426.3 L535.7,427.0 L534.5,426.8 L533.3,426.7 L532.1,426.6 L531.0,426.4 L529.8,426.4 L528.6,426.5 L527.4,426.4 L526.2,426.8 L525.1,426.5 L523.9,426.9 L522.7,426.7 L521.5,427.0 L520.3,427.0 L519.1,426.8 L518.0,426.5 L516.8,426.6 L515.6,426.5 L514.4,426.8 L513.2,427.0 L512.1,426.7 L510.9,426.9 L509.7,426.8 L508.5,426.3 L507.3,426.7 L506.2,426.9 L505.0,426.8 L503.8,426.5 L502.6,426.7 L501.4,426.3 L500.3,426.7 L499.1,426.3 L497.9,427.0 L496.7,426.2 L495.5,426.8 L494.4,426.6 L493.2,427.0 L492.0,426.9 L490.8,426.4 L489.6,426.8 L488.5,427.1 L487.3,426.4 L486.1,426.8 L484.9,426.5 L483.7,426.2 L482.6,426.7 L481.4,426.7 L480.2,426.4 L479.0,427.0 L477.8,427.1 L476.7,427.0 L475.5,426.3 L474.3,426.5 L473.1,427.0 L471.9,426.9 L470.8,426.5 L469.6,426.5 L468.4,426.6 L467.2,427.0 L466.0,426.4 L464.9,426.7 L463.7,426.4 L462.5,426.2 L461.3,427.0 L460.1,426.9 L459.0,426.3 L457.8,426.4 L456.6,426.6 L455.4,427.1 L454.2,426.8 L453.1,426.4 L451.9,426.3 L450.7,426.2 L449.5,426.7 L448.3,426.4 L447.2,426.9 L446.0,426.5 L444.8,427.0 L443.6,427.1 L442.4,426.8 L441.3,426.6 L440.1,426.6 L438.9,426.9 L437.7,426.4 L436.5,426.7 L435.4,426.5 L434.2,426.7 L433.0,426.4 L431.8,426.3 L430.6,426.8 L429.5,426.7 L428.3,426.9 L427.1,426.5 L425.9,427.0 L424.7,426.4 L423.6,426.8 L422.4,426.2 L421.2,426.7 L420.0,426.9 L418.8,426.5 L417.7,426.5 L416.5,427.0 L415.3,426.3 L414.1,426.5 L412.9,426.4 L411.8,426.2 L410.6,426.9 L409.4,427.0 L408.2,426.7 L407.0,426.6 L405.8,427.0 L404.7,426.3 L403.5,426.9 L402.3,426.7 L401.1,426.7 L399.9,426.3 L398.8,427.0 L397.6,426.3 L396.4,426.9 L395.2,426.9 L394.0,427.1 L392.9,426.8 L391.7,426.7 L390.5,426.4 L389.3,426.3 L388.1,426.7 L387.0,427.1 L385.8,427.0 L384.6,426.7 L383.4,427.0 L382.2,426.7 L381.1,427.2 L379.9,427.2 L378.7,426.8 L377.5,427.0 L376.3,427.3 L375.2,427.2 L374.0,427.4 L372.8,427.0 L371.6,427.4 L370.4,427.3 L369.3,427.8 L368.1,427.6 L366.9,427.5 L365.7,427.4 L364.5,427.9 L363.4,427.7 L362.2,427.8 L361.0,428.0 L359.8,427.7 L358.6,427.8 L357.5,428.5 L356.3,428.3 L355.1,427.9 L353.9,427.9 L352.7,427.8 L351.6,428.3 L350.4,428.1 L349.2,428.1 L348.0,428.7 L346.8,428.5 L345.7,428.4 L344.5,429.1 L343.3,429.0 L342.1,428.5 L340.9,428.7 L339.8,428.9 L338.6,429.0 L337.4,428.6 L336.2,429.0 L335.0,429.1 L333.9,428.8 L332.7,429.1 L331.5,429.5 L330.3,429.2 L329.1,429.1 L328.0,429.5 L326.8,429.2 L325.6,429.7 L324.4,429.5 L323.2,429.1 L322.1,429.7 L320.9,429.2 L319.7,429.3 L318.5,429.9 L317.3,429.6 L316.2,429.4 L315.0,430.0 L313.8,429.8 L312.6,429.9 L311.4,429.6 L310.3,429.7 L309.1,430.4 L307.9,430.1 L306.7,430.0 L305.5,430.1 L304.4,430.2 L303.2,430.4 L302.0,430.1 L300.8,430.7 L299.6,430.3 L298.5,430.3 L297.3,430.8 L296.1,430.4 L294.9,430.8 L293.7,430.6 L292.6,430.7 L291.4,431.0 L290.2,431.1 L289.0,431.0 L287.8,430.7 L286.6,431.1 L285.5,431.1 L284.3,431.2 L283.1,431.1 L281.9,431.1 L280.7,431.4 L279.6,430.7 L278.4,430.7 L277.2,431.2 L276.0,431.1 L274.8,431.5 L273.7,431.4 L272.5,431.4 L271.3,431.3 L270.1,430.8 L268.9,431.6 L267.8,430.9 L266.6,431.0 L265.4,431.6 L264.2,431.0 L263.0,431.6 L261.9,431.5 L260.7,431.4 L259.5,431.8 L258.3,431.7 L257.1,431.2 L256.0,431.1 L254.8,431.1 L253.6,431.3 L252.4,431.7 L251.2,431.5 L250.1,431.6 L248.9,431.9 L247.7,431.3 L246.5,431.8 L245.3,431.9 L244.2,431.7 L243.0,431.6 L241.8,431.3 L240.6,432.0 L239.4,431.8 L238.3,431.5 L237.1,431.9 L235.9,432.1 L234.7,432.3 L233.5,431.8 L232.4,431.9 L231.2,431.6 L230.0,432.4 L228.8,431.9 L227.6,432.4 L226.5,432.1 L225.3,432.3 L224.1,431.7 L222.9,432.0 L221.7,432.1 L220.6,432.2 L219.4,431.8 L218.2,431.7 L217.0,432.1 L215.8,432.1 L214.7,432.5 L213.5,432.5 L212.3,431.6 L211.1,431.9 L209.9,432.2 L208.8,432.5 L207.6,431.9 L206.4,431.7 L205.2,432.5 L204.0,432.2 L202.9,432.0 L201.7,432.0 L200.5,432.2 L199.3,432.2 L198.1,432.3 L197.0,432.4 L195.8,432.5 L194.6,431.9 L193.4,432.6 L192.2,432.3 L191.1,432.6 L189.9,432.6 L188.7,432.1 L187.5,431.9 L186.3,432.5 L185.2,432.4 L184.0,431.9 L182.8,432.3 L181.6,432.4 L180.4,431.9 L179.3,432.6 L178.1,432.1 L176.9,432.4 L175.7,431.9 L174.5,432.0 L173.4,432.0 L172.2,432.1 L171.0,432.3 L169.8,432.0 L168.6,432.3 L167.4,432.8 L166.3,432.6 L165.1,432.5 L163.9,432.8 L162.7,432.7 L161.5,432.3 L160.4,432.5 L159.2,432.7 L158.0,432.7 L156.8,432.3 L155.6,432.1 L154.5,432.3 L153.3,432.6 L152.1,432.5 L150.9,432.4 L149.7,432.6 L148.6,432.6 L147.4,432.3 L146.2,432.1 L145.0,432.5 L143.8,432.1 L142.7,432.5 L141.5,432.8 L140.3,432.6 L139.1,432.1 L137.9,432.6 L136.8,432.2 L135.6,432.9 L134.4,432.3 L133.2,432.2 L132.0,432.6 L130.9,433.0 L129.7,432.5 L128.5,432.6 L127.3,432.6 L126.1,432.2 L125.0,432.3 L123.8,432.6 L122.6,432.6 L121.4,432.7 L120.2,432.2 L119.1,432.8 L117.9,432.5 L116.7,432.8 L115.5,432.4 L114.3,432.7 L113.2,433.0 L112.0,432.9 L110.8,432.3 L109.6,432.9 L108.4,432.4 L107.3,432.4 L106.1,432.3 L104.9,432.3 L103.7,432.6 L102.5,432.9 L101.4,432.9 L100.2,432.9 L99.0,432.7Z" fill="#808080" fill-opacity="0.5"/>
<line x1="101.7" y1="419.9" x2="1299.2" y2="419.9" stroke="#808080" stroke-width="1.5"/>
<line x1="272.3" y1="348.5" x2="272.3" y2="432.3" stroke="#555" stroke-width="1.3" stroke-dasharray="4.5,3"/>
<line x1="654.8" y1="348.5" x2="654.8" y2="432.3" stroke="#555" stroke-width="1.3" stroke-dasharray="4.5,3"/>
<line x1="531" y1="348.5" x2="531" y2="432.3" stroke="#222" stroke-width="1.3" stroke-dasharray="2,2"/>
<path d="M100.0,405.4 L102.9,405.4 L105.7,395.7 L107.9,425.7 L110.0,391.4 L111.4,407.1 L112.9,391.4 L114.3,415.7 L116.4,397.1 L119.3,431.4 L121.4,400.0 L123.6,411.4 L125.7,402.9 L127.9,405.7 L130.0,376.4 L132.1,394.3 L133.6,400.0 L136.4,392.9 L138.6,401.4 L141.4,397.1 L143.6,420.0 L145.7,401.4 L148.6,410.0 L154.3,397.9 L158.6,418.6 L162.1,400.7 L165.0,404.3 L168.6,405.7 L171.4,407.1 L174.3,408.6 L178.6,400.0 L181.4,414.3 L184.3,397.1 L186.4,407.1 L188.6,402.9 L191.4,410.0 L195.0,393.6 L197.9,414.3 L200.7,398.6 L202.9,402.9 L205.4,385.0 L207.1,405.7 L210.0,396.4 L212.9,407.1 L217.1,408.6 L220.0,402.9 L225.7,398.6 L228.6,390.0 L231.4,404.3 L235.0,397.1 L238.6,404.3 L241.4,415.7 L244.3,401.4 L247.1,416.4 L250.0,412.9 L252.9,394.3 L255.7,414.3 L259.3,402.9 L262.9,407.1 L265.7,405.7 L269.3,414.3 L271.4,392.9 L273.6,404.3 L276.4,392.9 L280.0,394.3 L282.9,405.7 L285.0,401.4 L287.1,407.1 L292.9,394.3 L295.7,410.0 L297.9,407.1 L300.7,412.9 L302.1,404.3 L303.6,412.1 L306.4,417.1 L308.6,410.0 L309.3,418.6 L312.1,408.6 L315.0,400.0 L317.9,408.6 L320.7,409.3 L325.0,410.0 L327.9,405.0 L330.0,411.4 L333.6,405.0 L336.4,410.0 L339.3,408.6 L342.1,402.9 L345.0,407.1 L347.9,404.3 L352.1,405.7 L356.4,400.7 L359.3,401.4 L362.1,408.6 L365.0,411.4 L367.9,417.9 L370.7,408.6 L373.6,405.7 L377.1,400.0 L380.7,405.7 L384.3,414.3 L389.3,404.3 L393.6,397.1 L395.0,400.0 L397.9,395.7 L400.7,391.4 L403.6,394.3 L405.0,390.0 L409.3,394.3 L412.1,391.4 L415.0,390.0 L417.9,384.3 L420.7,391.4 L423.6,395.7 L427.9,387.1 L432.1,398.6 L436.4,390.0 L439.3,397.9 L442.1,392.9 L444.3,397.1 L446.4,388.6 L449.3,392.9 L450.7,387.1 L453.6,392.9 L457.1,382.1 L460.7,385.7 L464.3,392.9 L467.1,392.1 L469.3,385.7 L472.1,390.0 L475.7,382.9 L479.3,388.6 L482.1,385.7 L484.3,390.0 L487.1,379.3 L490.7,392.9 L492.9,388.6 L495.7,390.0 L499.3,380.0 L502.1,385.7 L505.0,382.1 L507.9,390.0 L510.0,387.1 L512.9,390.0 L515.7,395.0 L517.9,385.0 L520.7,383.6 L523.6,393.6 L526.4,392.9 L528.6,387.9 L531.0,376.4 L532.9,384.3 L535.7,390.0 L539.3,407.1 L542.9,387.1 L545.0,392.9 L548.6,382.9 L551.4,385.7 L553.6,392.9 L556.4,391.4 L558.6,395.7 L562.1,380.0 L565.0,395.7 L567.9,392.9 L571.4,383.6 L575.7,401.4 L579.3,386.4 L582.9,398.6 L587.1,404.3 L591.4,383.6 L593.6,384.3 L596.4,390.7 L601.4,377.1 L604.3,382.9 L607.1,387.1 L610.0,376.4 L612.9,390.0 L615.0,388.6 L617.1,390.0 L620.0,380.0 L624.3,387.1 L628.6,382.1 L632.9,391.4 L635.7,387.1 L637.1,391.4 L640.7,377.1 L642.9,387.1 L645.7,390.0 L648.6,369.3 L651.4,378.6 L655.0,374.3 L657.9,382.9 L660.0,375.0 L661.4,382.9 L665.0,372.1 L667.9,378.6 L672.1,377.1 L675.7,390.7 L678.6,375.7 L682.1,374.3 L685.7,362.9 L689.3,380.7 L692.1,369.3 L695.0,377.9 L697.9,368.6 L699.3,378.6 L702.1,367.9 L705.7,365.0 L707.9,374.3 L710.7,367.9 L713.6,375.0 L717.1,378.6 L720.7,385.0 L724.3,362.9 L726.4,372.9 L728.6,376.4 L731.4,365.7 L733.6,375.0 L735.7,365.7 L739.3,367.9 L741.4,364.3 L745.0,366.4 L746.4,361.4 L749.3,368.6 L752.1,366.4 L755.0,370.7 L757.9,372.1 L760.7,368.6 L764.3,369.3 L767.9,366.4 L770.7,363.6 L772.1,370.0 L775.0,365.0 L777.9,365.7 L781.0,359.3 L783.6,365.7 L787.1,372.1 L790.0,369.3 L792.1,370.0 L795.7,358.6 L799.3,370.7 L803.6,364.3 L806.4,367.9 L809.3,365.7 L812.1,371.4 L815.0,364.3 L820.0,380.0 L823.6,367.1 L826.4,370.7 L830.7,368.6 L834.3,362.9 L836.4,371.4 L840.7,365.7 L843.6,373.6 L845.0,360.7 L847.9,370.0 L851.4,366.4 L853.6,367.1 L856.4,375.7 L861.4,366.4 L865.0,373.6 L868.6,371.4 L872.1,368.6 L875.7,362.9 L877.9,371.4 L880.7,367.1 L882.9,366.4 L885.7,368.6 L888.6,365.7 L890.7,373.6 L894.3,367.1 L897.1,372.9 L902.9,367.9 L905.0,372.9 L908.6,366.4 L910.7,369.3 L913.6,377.9 L916.4,373.6 L920.0,374.3 L922.9,369.3 L927.1,362.9 L929.3,374.3 L931.4,370.0 L935.7,365.7 L938.6,373.6 L941.4,366.4 L944.3,370.7 L945.7,368.6 L950.0,375.0 L952.1,365.7 L954.3,370.7 L957.9,365.7 L961.4,368.6 L965.4,360.7 L967.9,367.9 L970.7,372.9 L973.6,362.1 L977.1,377.1 L980.0,363.6 L982.9,367.9 L985.0,375.7 L988.6,369.3 L992.9,368.6 L995.7,370.7 L998.6,377.9 L1000.7,366.4 L1004.3,374.3 L1007.1,371.4 L1010.0,374.3 L1013.6,370.7 L1017.1,372.9 L1020.7,380.0 L1024.3,369.3 L1026.4,379.3 L1028.6,367.9 L1032.1,374.3 L1035.7,367.9 L1038.6,372.9 L1042.9,377.9 L1046.4,368.6 L1048.6,374.3 L1052.9,373.6 L1055.7,380.0 L1060.0,370.7 L1062.9,365.7 L1065.7,375.7 L1067.1,370.0 L1070.7,378.6 L1074.3,372.1 L1078.3,371.2 L1082.4,377.8 L1086.5,383.5 L1090.6,372.0 L1093.1,379.4 L1094.7,389.3 L1097.2,396.7 L1100.5,380.2 L1102.1,387.6 L1104.6,397.5 L1107.0,375.3 L1109.5,379.4 L1112.8,363.0 L1116.1,376.1 L1118.5,388.5 L1121.8,369.6 L1124.3,363.0 L1126.7,355.6 L1128.4,371.2 L1130.9,369.6 L1134.1,355.6 L1136.6,364.6 L1139.9,363.0 L1142.4,367.9 L1145.6,364.6 L1148.1,368.7 L1150.6,372.0 L1153.9,379.4 L1156.3,374.5 L1158.8,360.5 L1162.1,364.6 L1165.4,359.7 L1169.5,361.4 L1171.9,367.1 L1174.4,363.0 L1176.9,365.5 L1178.8,352.3 L1181.8,361.4 L1185.1,362.2 L1188.4,374.5 L1190.8,364.6 L1193.3,358.9 L1195.7,367.9 L1198.2,358.1 L1199.9,368.7 L1203.1,359.7 L1206.4,362.2 L1209.7,360.5 L1213.8,368.7 L1218.7,356.4 L1222.0,358.1 L1224.5,355.6 L1228.6,364.6 L1232.7,362.2 L1236.0,367.1 L1240.1,355.6 L1244.2,363.0 L1247.5,368.7 L1250.8,368.7 L1254.1,361.4 L1256.5,354.8 L1259.0,373.7 L1261.5,361.4 L1265.6,365.5 L1269.7,360.5 L1272.1,362.2 L1274.6,366.3 L1278.7,369.6 L1281.2,358.1 L1284.5,360.5 L1286.9,367.1 L1290.2,361.4 L1293.5,358.9 L1296.0,363.8 L1299.2,363.0" fill="none" stroke="#0000ff" stroke-width="1.15" stroke-linejoin="round"/>
<rect x="131.4" y="348.5" width="12.099999999999994" height="83.80000000000001" fill="#606060" fill-opacity="0.55" stroke="#333" stroke-width="1"/>
<path d="M131.4,365.5 L143.5,355.2 M131.4,389.0 L143.5,378.7 M131.4,412.5 L143.5,402.2 M131.4,436.0 L143.5,425.7" stroke="#222" stroke-width="1" fill="none"/>
<rect x="1265.4" y="348.5" width="6.2999999999999545" height="83.80000000000001" fill="#606060" fill-opacity="0.55" stroke="#333" stroke-width="1"/>
<path d="M1265.4,365.5 L1271.7,360.1 M1265.4,389.0 L1271.7,383.6 M1265.4,412.5 L1271.7,407.1 M1265.4,436.0 L1271.7,430.6" stroke="#222" stroke-width="1" fill="none"/>
</g>
<rect x="101.7" y="348.5" width="1197.5" height="83.80000000000001" fill="none" stroke="#333" stroke-width="1.1"/>
<line x1="110.8" y1="432.3" x2="110.8" y2="435.8" stroke="#333" stroke-width="1"/>
<text x="110.8" y="447.1" font-family="'Liberation Sans', sans-serif" font-size="10.8" text-anchor="middle" textLength="23.5" lengthAdjust="spacingAndGlyphs" stroke="#000" stroke-width="0.18">3500</text>
<line x1="169.8" y1="432.3" x2="169.8" y2="435.8" stroke="#333" stroke-width="1"/>
<text x="169.8" y="447.1" font-family="'Liberation Sans', sans-serif" font-size="10.8" text-anchor="middle" textLength="23.5" lengthAdjust="spacingAndGlyphs" stroke="#000" stroke-width="0.18">3600</text>
<line x1="228.8" y1="432.3" x2="228.8" y2="435.8" stroke="#333" stroke-width="1"/>
<text x="228.8" y="447.1" font-family="'Liberation Sans', sans-serif" font-size="10.8" text-anchor="middle" textLength="23.5" lengthAdjust="spacingAndGlyphs" stroke="#000" stroke-width="0.18">3700</text>
<line x1="287.8" y1="432.3" x2="287.8" y2="435.8" stroke="#333" stroke-width="1"/>
<text x="287.8" y="447.1" font-family="'Liberation Sans', sans-serif" font-size="10.8" text-anchor="middle" textLength="23.5" lengthAdjust="spacingAndGlyphs" stroke="#000" stroke-width="0.18">3800</text>
<line x1="346.8" y1="432.3" x2="346.8" y2="435.8" stroke="#333" stroke-width="1"/>
<text x="346.8" y="447.1" font-family="'Liberation Sans', sans-serif" font-size="10.8" text-anchor="middle" textLength="23.5" lengthAdjust="spacingAndGlyphs" stroke="#000" stroke-width="0.18">3900</text>
<line x1="405.8" y1="432.3" x2="405.8" y2="435.8" stroke="#333" stroke-width="1"/>
<text x="405.8" y="447.1" font-family="'Liberation Sans', sans-serif" font-size="10.8" text-anchor="middle" textLength="23.5" lengthAdjust="spacingAndGlyphs" stroke="#000" stroke-width="0.18">4000</text>
<line x1="464.9" y1="432.3" x2="464.9" y2="435.8" stroke="#333" stroke-width="1"/>
<text x="464.9" y="447.1" font-family="'Liberation Sans', sans-serif" font-size="10.8" text-anchor="middle" textLength="23.5" lengthAdjust="spacingAndGlyphs" stroke="#000" stroke-width="0.18">4100</text>
<line x1="523.9" y1="432.3" x2="523.9" y2="435.8" stroke="#333" stroke-width="1"/>
<text x="523.9" y="447.1" font-family="'Liberation Sans', sans-serif" font-size="10.8" text-anchor="middle" textLength="23.5" lengthAdjust="spacingAndGlyphs" stroke="#000" stroke-width="0.18">4200</text>
<line x1="582.9" y1="432.3" x2="582.9" y2="435.8" stroke="#333" stroke-width="1"/>
<text x="582.9" y="447.1" font-family="'Liberation Sans', sans-serif" font-size="10.8" text-anchor="middle" textLength="23.5" lengthAdjust="spacingAndGlyphs" stroke="#000" stroke-width="0.18">4300</text>
<line x1="641.9" y1="432.3" x2="641.9" y2="435.8" stroke="#333" stroke-width="1"/>
<text x="641.9" y="447.1" font-family="'Liberation Sans', sans-serif" font-size="10.8" text-anchor="middle" textLength="23.5" lengthAdjust="spacingAndGlyphs" stroke="#000" stroke-width="0.18">4400</text>
<line x1="700.9" y1="432.3" x2="700.9" y2="435.8" stroke="#333" stroke-width="1"/>
<text x="700.9" y="447.1" font-family="'Liberation Sans', sans-serif" font-size="10.8" text-anchor="middle" textLength="23.5" lengthAdjust="spacingAndGlyphs" stroke="#000" stroke-width="0.18">4500</text>
<line x1="759.9" y1="432.3" x2="759.9" y2="435.8" stroke="#333" stroke-width="1"/>
<text x="759.9" y="447.1" font-family="'Liberation Sans', sans-serif" font-size="10.8" text-anchor="middle" textLength="23.5" lengthAdjust="spacingAndGlyphs" stroke="#000" stroke-width="0.18">4600</text>
<line x1="818.9" y1="432.3" x2="818.9" y2="435.8" stroke="#333" stroke-width="1"/>
<text x="818.9" y="447.1" font-family="'Liberation Sans', sans-serif" font-size="10.8" text-anchor="middle" textLength="23.5" lengthAdjust="spacingAndGlyphs" stroke="#000" stroke-width="0.18">4700</text>
<line x1="877.9" y1="432.3" x2="877.9" y2="435.8" stroke="#333" stroke-width="1"/>
<text x="877.9" y="447.1" font-family="'Liberation Sans', sans-serif" font-size="10.8" text-anchor="middle" textLength="23.5" lengthAdjust="spacingAndGlyphs" stroke="#000" stroke-width="0.18">4800</text>
<line x1="936.9" y1="432.3" x2="936.9" y2="435.8" stroke="#333" stroke-width="1"/>
<text x="936.9" y="447.1" font-family="'Liberation Sans', sans-serif" font-size="10.8" text-anchor="middle" textLength="23.5" lengthAdjust="spacingAndGlyphs" stroke="#000" stroke-width="0.18">4900</text>
<line x1="995.9" y1="432.3" x2="995.9" y2="435.8" stroke="#333" stroke-width="1"/>
<text x="995.9" y="447.1" font-family="'Liberation Sans', sans-serif" font-size="10.8" text-anchor="middle" textLength="23.5" lengthAdjust="spacingAndGlyphs" stroke="#000" stroke-width="0.18">5000</text>
<line x1="1055.0" y1="432.3" x2="1055.0" y2="435.8" stroke="#333" stroke-width="1"/>
<text x="1055.0" y="447.1" font-family="'Liberation Sans', sans-serif" font-size="10.8" text-anchor="middle" textLength="23.5" lengthAdjust="spacingAndGlyphs" stroke="#000" stroke-width="0.18">5100</text>
<line x1="1114.0" y1="432.3" x2="1114.0" y2="435.8" stroke="#333" stroke-width="1"/>
<text x="1114.0" y="447.1" font-family="'Liberation Sans', sans-serif" font-size="10.8" text-anchor="middle" textLength="23.5" lengthAdjust="spacingAndGlyphs" stroke="#000" stroke-width="0.18">5200</text>
<line x1="1173.0" y1="432.3" x2="1173.0" y2="435.8" stroke="#333" stroke-width="1"/>
<text x="1173.0" y="447.1" font-family="'Liberation Sans', sans-serif" font-size="10.8" text-anchor="middle" textLength="23.5" lengthAdjust="spacingAndGlyphs" stroke="#000" stroke-width="0.18">5300</text>
<line x1="1232.0" y1="432.3" x2="1232.0" y2="435.8" stroke="#333" stroke-width="1"/>
<text x="1232.0" y="447.1" font-family="'Liberation Sans', sans-serif" font-size="10.8" text-anchor="middle" textLength="23.5" lengthAdjust="spacingAndGlyphs" stroke="#000" stroke-width="0.18">5400</text>
<line x1="1291.0" y1="432.3" x2="1291.0" y2="435.8" stroke="#333" stroke-width="1"/>
<text x="1291.0" y="447.1" font-family="'Liberation Sans', sans-serif" font-size="10.8" text-anchor="middle" textLength="23.5" lengthAdjust="spacingAndGlyphs" stroke="#000" stroke-width="0.18">5500</text>
<line x1="98.2" y1="419.9" x2="101.7" y2="419.9" stroke="#333" stroke-width="1"/>
<text x="94.7" y="423.6" font-family="'Liberation Sans', sans-serif" font-size="10.8" text-anchor="end" textLength="5.8" lengthAdjust="spacingAndGlyphs" stroke="#000" stroke-width="0.18">0</text>
<line x1="98.2" y1="382.1" x2="101.7" y2="382.1" stroke="#333" stroke-width="1"/>
<text x="94.7" y="385.8" font-family="'Liberation Sans', sans-serif" font-size="10.8" text-anchor="end" textLength="11.8" lengthAdjust="spacingAndGlyphs" stroke="#000" stroke-width="0.18">10</text>
<text x="111.2" y="345.8" font-family="'Liberation Sans', sans-serif" font-size="10.8" textLength="39" lengthAdjust="spacingAndGlyphs" stroke="#000" stroke-width="0.18">e<tspan dy="-4" font-size="7.6">−17</tspan><tspan dy="4">x2Å</tspan></text>
<text transform="translate(107.3,324.5) rotate(90)" x="0" y="0" font-family="'Liberation Sans', sans-serif" font-size="10.6" fill="#ff00ff" textLength="10.5" lengthAdjust="spacingAndGlyphs" stroke="#ff00ff" stroke-width="0.18">CII</text>
<path d="M106.3,347.0 Q106.3,345.3 107.5,345.3 L109.9,345.3 L110.7,344.2 L111.5,345.3 L113.9,345.3 Q115.1,345.3 115.1,347.0" fill="none" stroke="#ff00ff" stroke-width="1.1"/>
<text transform="translate(160.9,279.2) rotate(90)" x="0" y="0" font-family="'Liberation Sans', sans-serif" font-size="10.6" fill="#ffa500" textLength="17.5" lengthAdjust="spacingAndGlyphs" stroke="#ffa500" stroke-width="0.18">SiIV</text>
<path d="M159.9,304.9 Q159.9,303.2 161.1,303.2 L163.5,303.2 L164.3,302.1 L165.1,303.2 L167.5,303.2 Q168.7,303.2 168.7,304.9" fill="none" stroke="#ffa500" stroke-width="1.1"/>
<text transform="translate(158.5,319.8) rotate(90)" x="0" y="0" font-family="'Liberation Sans', sans-serif" font-size="10.6" fill="#ff0000" textLength="16.0" lengthAdjust="spacingAndGlyphs" stroke="#ff0000" stroke-width="0.18">OVI</text>
<path d="M157.5,347.0 Q157.5,345.3 158.7,345.3 L161.1,345.3 L161.9,344.2 L162.7,345.3 L165.1,345.3 Q166.3,345.3 166.3,347.0" fill="none" stroke="#ff0000" stroke-width="1.1"/>
<text transform="translate(179.0,321.0) rotate(90)" x="0" y="0" font-family="'Liberation Sans', sans-serif" font-size="10.6" fill="#800080" textLength="17.6" lengthAdjust="spacingAndGlyphs" stroke="#800080" stroke-width="0.18">HeII</text>
<path d="M178.0,347.0 Q178.0,345.3 179.2,345.3 L181.6,345.3 L182.4,344.2 L183.2,345.3 L185.6,345.3 Q186.8,345.3 186.8,347.0" fill="none" stroke="#800080" stroke-width="1.1"/>
<text transform="translate(273.6,317.0) rotate(90)" x="0" y="0" font-family="'Liberation Sans', sans-serif" font-size="10.6" fill="#008000" textLength="18.8" lengthAdjust="spacingAndGlyphs" stroke="#008000" stroke-width="0.18">NeV</text>
<path d="M272.6,347.0 Q272.6,345.3 273.8,345.3 L276.2,345.3 L277.0,344.2 L277.8,345.3 L280.2,345.3 Q281.4,345.3 281.4,347.0" fill="none" stroke="#008000" stroke-width="1.1"/>
<text transform="translate(285.3,321.0) rotate(90)" x="0" y="0" font-family="'Liberation Sans', sans-serif" font-size="10.6" fill="#8a2be2" textLength="17.6" lengthAdjust="spacingAndGlyphs" stroke="#8a2be2" stroke-width="0.18">SiIV</text>
<path d="M284.3,347.0 Q284.3,345.3 285.5,345.3 L287.9,345.3 L288.7,344.2 L289.5,345.3 L291.9,345.3 Q293.1,345.3 293.1,347.0" fill="none" stroke="#8a2be2" stroke-width="1.1"/>
<text transform="translate(377.6,323.3) rotate(90)" x="0" y="0" font-family="'Liberation Sans', sans-serif" font-size="10.6" fill="#87ceeb" textLength="11.7" lengthAdjust="spacingAndGlyphs" stroke="#87ceeb" stroke-width="0.18">OII</text>
<path d="M376.6,347.0 Q376.6,345.3 377.8,345.3 L380.2,345.3 L381.0,344.2 L381.8,345.3 L384.2,345.3 Q385.4,345.3 385.4,347.0" fill="none" stroke="#87ceeb" stroke-width="1.1"/>
<text transform="translate(390.6,320.3) rotate(90)" x="0" y="0" font-family="'Liberation Sans', sans-serif" font-size="10.6" fill="#ffa500" textLength="15.5" lengthAdjust="spacingAndGlyphs" stroke="#ffa500" stroke-width="0.18">CIV</text>
<path d="M389.6,347.0 Q389.6,345.3 390.8,345.3 L393.2,345.3 L394.0,344.2 L394.8,345.3 L397.2,345.3 Q398.4,345.3 398.4,347.0" fill="none" stroke="#ffa500" stroke-width="1.1"/>
<text transform="translate(398.9,323.3) rotate(90)" x="0" y="0" font-family="'Liberation Sans', sans-serif" font-size="10.6" fill="#87ceeb" textLength="11.7" lengthAdjust="spacingAndGlyphs" stroke="#87ceeb" stroke-width="0.18">OII</text>
<path d="M397.9,347.0 Q397.9,345.3 399.1,345.3 L401.5,345.3 L402.3,344.2 L403.1,345.3 L405.5,345.3 Q406.7,345.3 406.7,347.0" fill="none" stroke="#87ceeb" stroke-width="1.1"/>
<text transform="translate(578.9,319.3) rotate(90)" x="0" y="0" font-family="'Liberation Sans', sans-serif" font-size="10.6" fill="#ff0000" textLength="14.3" lengthAdjust="spacingAndGlyphs" stroke="#ff0000" stroke-width="0.18">NV</text>
<path d="M577.9,347.0 Q577.9,345.3 579.1,345.3 L581.5,345.3 L582.3,344.2 L583.1,345.3 L585.5,345.3 Q586.7,345.3 586.7,347.0" fill="none" stroke="#ff0000" stroke-width="1.1"/>
<text transform="translate(626.0,325.0) rotate(90)" x="0" y="0" font-family="'Liberation Sans', sans-serif" font-size="10.6" fill="#ff0000" textLength="15.1" lengthAdjust="spacingAndGlyphs" stroke="#ff0000" stroke-width="0.18">SiII</text>
<path d="M625.0,347.0 Q625.0,345.3 626.2,345.3 L628.6,345.3 L629.4,344.2 L630.2,345.3 L632.6,345.3 Q633.8,345.3 633.8,347.0" fill="none" stroke="#ff0000" stroke-width="1.1"/>
<text transform="translate(673.6,320.7) rotate(90)" x="0" y="0" font-family="'Liberation Sans', sans-serif" font-size="10.6" fill="#8a2be2" textLength="19.3" lengthAdjust="spacingAndGlyphs" stroke="#8a2be2" stroke-width="0.18">HeII</text>
<path d="M672.6,347.0 Q672.6,345.3 673.8,345.3 L676.2,345.3 L677.0,344.2 L677.8,345.3 L680.2,345.3 Q681.4,345.3 681.4,347.0" fill="none" stroke="#8a2be2" stroke-width="1.1"/>
<text transform="translate(760.3,327.9) rotate(90)" x="0" y="0" font-family="'Liberation Sans', sans-serif" font-size="10.6" fill="#87ceeb" textLength="14.1" lengthAdjust="spacingAndGlyphs" stroke="#87ceeb" stroke-width="0.18">Hγ</text>
<path d="M759.3,347.0 Q759.3,345.3 760.5,345.3 L762.9,345.3 L763.7,344.2 L764.5,345.3 L766.9,345.3 Q768.1,345.3 768.1,347.0" fill="none" stroke="#87ceeb" stroke-width="1.1"/>
<text transform="translate(785.2,327.9) rotate(90)" x="0" y="0" font-family="'Liberation Sans', sans-serif" font-size="10.6" fill="#87ceeb" textLength="14.1" lengthAdjust="spacingAndGlyphs" stroke="#87ceeb" stroke-width="0.18">Hγ</text>
<path d="M784.2,347.0 Q784.2,345.3 785.4,345.3 L787.8,345.3 L788.6,344.2 L789.4,345.3 L791.8,345.3 Q793.0,345.3 793.0,347.0" fill="none" stroke="#87ceeb" stroke-width="1.1"/>
<text transform="translate(900.3,321.3) rotate(90)" x="0" y="0" font-family="'Liberation Sans', sans-serif" font-size="10.6" fill="#ff0000" textLength="17.7" lengthAdjust="spacingAndGlyphs" stroke="#ff0000" stroke-width="0.18">SiIV</text>
<path d="M899.3,347.0 Q899.3,345.3 900.5,345.3 L902.9,345.3 L903.7,344.2 L904.5,345.3 L906.9,345.3 Q908.1,345.3 908.1,347.0" fill="none" stroke="#ff0000" stroke-width="1.1"/>
<text transform="translate(934.3,282.0) rotate(90)" x="0" y="0" font-family="'Liberation Sans', sans-serif" font-size="10.6" fill="#ffa500" textLength="15.9" lengthAdjust="spacingAndGlyphs" stroke="#ffa500" stroke-width="0.18">CIII</text>
<path d="M933.3,304.9 Q933.3,303.2 934.5,303.2 L936.9,303.2 L937.7,302.1 L938.5,303.2 L940.9,303.2 Q942.1,303.2 942.1,304.9" fill="none" stroke="#ffa500" stroke-width="1.1"/>
<text transform="translate(936.0,327.9) rotate(90)" x="0" y="0" font-family="'Liberation Sans', sans-serif" font-size="10.6" fill="#008000" textLength="14.1" lengthAdjust="spacingAndGlyphs" stroke="#008000" stroke-width="0.18">Hγ</text>
<path d="M935.0,347.0 Q935.0,345.3 936.2,345.3 L938.6,345.3 L939.4,344.2 L940.2,345.3 L942.6,345.3 Q943.8,345.3 943.8,347.0" fill="none" stroke="#008000" stroke-width="1.1"/>
<text transform="translate(1069.0,324.2) rotate(90)" x="0" y="0" font-family="'Liberation Sans', sans-serif" font-size="10.6" fill="#800080" textLength="11.6" lengthAdjust="spacingAndGlyphs" stroke="#800080" stroke-width="0.18">CII</text>
<path d="M1068.0,347.0 Q1068.0,345.3 1069.2,345.3 L1071.6,345.3 L1072.4,344.2 L1073.2,345.3 L1075.6,345.3 Q1076.8,345.3 1076.8,347.0" fill="none" stroke="#800080" stroke-width="1.1"/>
<text transform="translate(1087.1,328.0) rotate(90)" x="0" y="0" font-family="'Liberation Sans', sans-serif" font-size="10.6" fill="#87ceeb" textLength="11.6" lengthAdjust="spacingAndGlyphs" stroke="#87ceeb" stroke-width="0.18">Hβ</text>
<path d="M1086.1,347.0 Q1086.1,345.3 1087.3,345.3 L1089.7,345.3 L1090.5,344.2 L1091.3,345.3 L1093.7,345.3 Q1094.9,345.3 1094.9,347.0" fill="none" stroke="#87ceeb" stroke-width="1.1"/>
<text transform="translate(1104.5,324.2) rotate(90)" x="0" y="0" font-family="'Liberation Sans', sans-serif" font-size="10.6" fill="#8a2be2" textLength="14.4" lengthAdjust="spacingAndGlyphs" stroke="#8a2be2" stroke-width="0.18">CIII</text>
<path d="M1103.5,347.0 Q1103.5,345.3 1104.7,345.3 L1107.1,345.3 L1107.9,344.2 L1108.7,345.3 L1111.1,345.3 Q1112.3,345.3 1112.3,347.0" fill="none" stroke="#8a2be2" stroke-width="1.1"/>
<text transform="translate(1114.7,328.0) rotate(90)" x="0" y="0" font-family="'Liberation Sans', sans-serif" font-size="10.6" fill="#87ceeb" textLength="11.6" lengthAdjust="spacingAndGlyphs" stroke="#87ceeb" stroke-width="0.18">Hβ</text>
<path d="M1113.7,347.0 Q1113.7,345.3 1114.9,345.3 L1117.3,345.3 L1118.1,344.2 L1118.9,345.3 L1121.3,345.3 Q1122.5,345.3 1122.5,347.0" fill="none" stroke="#87ceeb" stroke-width="1.1"/>
<text transform="translate(1148.5,323.2) rotate(90)" x="0" y="0" font-family="'Liberation Sans', sans-serif" font-size="10.6" fill="#87ceeb" textLength="15.4" lengthAdjust="spacingAndGlyphs" stroke="#87ceeb" stroke-width="0.18">OIII</text>
<path d="M1147.5,347.0 Q1147.5,345.3 1148.7,345.3 L1151.1,345.3 L1151.9,344.2 L1152.7,345.3 L1155.1,345.3 Q1156.3,345.3 1156.3,347.0" fill="none" stroke="#87ceeb" stroke-width="1.1"/>
<text transform="translate(1175.8,323.2) rotate(90)" x="0" y="0" font-family="'Liberation Sans', sans-serif" font-size="10.6" fill="#87ceeb" textLength="15.4" lengthAdjust="spacingAndGlyphs" stroke="#87ceeb" stroke-width="0.18">OIII</text>
<path d="M1174.8,347.0 Q1174.8,345.3 1176.0,345.3 L1178.4,345.3 L1179.2,344.2 L1180.0,345.3 L1182.4,345.3 Q1183.6,345.3 1183.6,347.0" fill="none" stroke="#87ceeb" stroke-width="1.1"/>
<text transform="translate(1178.4,281.8) rotate(90)" x="0" y="0" font-family="'Liberation Sans', sans-serif" font-size="10.6" fill="#87ceeb" textLength="14.4" lengthAdjust="spacingAndGlyphs" stroke="#87ceeb" stroke-width="0.18">OIII</text>
<path d="M1177.4,304.9 Q1177.4,303.2 1178.6,303.2 L1181.0,303.2 L1181.8,302.1 L1182.6,303.2 L1185.0,303.2 Q1186.2,303.2 1186.2,304.9" fill="none" stroke="#87ceeb" stroke-width="1.1"/>
<text transform="translate(1206.3,281.8) rotate(90)" x="0" y="0" font-family="'Liberation Sans', sans-serif" font-size="10.6" fill="#87ceeb" textLength="14.4" lengthAdjust="spacingAndGlyphs" stroke="#87ceeb" stroke-width="0.18">OIII</text>
<path d="M1205.3,304.9 Q1205.3,303.2 1206.5,303.2 L1208.9,303.2 L1209.7,302.1 L1210.5,303.2 L1212.9,303.2 Q1214.1,303.2 1214.1,304.9" fill="none" stroke="#87ceeb" stroke-width="1.1"/>
<text transform="translate(1210.2,320.3) rotate(90)" x="0" y="0" font-family="'Liberation Sans', sans-serif" font-size="10.6" fill="#ff0000" textLength="15.5" lengthAdjust="spacingAndGlyphs" stroke="#ff0000" stroke-width="0.18">CIV</text>
<path d="M1209.2,347.0 Q1209.2,345.3 1210.4,345.3 L1212.8,345.3 L1213.6,344.2 L1214.4,345.3 L1216.8,345.3 Q1218.0,345.3 1218.0,347.0" fill="none" stroke="#ff0000" stroke-width="1.1"/>
<text transform="translate(1284.4,327.5) rotate(90)" x="0" y="0" font-family="'Liberation Sans', sans-serif" font-size="10.6" fill="#008000" textLength="12.1" lengthAdjust="spacingAndGlyphs" stroke="#008000" stroke-width="0.18">Hβ</text>
<path d="M1283.4,347.0 Q1283.4,345.3 1284.6,345.3 L1287.0,345.3 L1287.8,344.2 L1288.6,345.3 L1291.0,345.3 Q1292.2,345.3 1292.2,347.0" fill="none" stroke="#008000" stroke-width="1.1"/>
<rect x="479.9" y="449.9" width="16.9" height="6.5" fill="#ff0000"/>
<text x="503.7" y="456.6" font-family="'Liberation Sans', sans-serif" font-size="9" fill="#222" stroke="#222" stroke-width="0.18">Lyα</text>
<rect x="534" y="449.9" width="16.9" height="6.5" fill="#008000"/>
<text x="557" y="456.6" font-family="'Liberation Sans', sans-serif" font-size="9" fill="#222" stroke="#222" stroke-width="0.18">OII</text>
<rect x="586.3" y="449.9" width="16.9" height="6.5" fill="#8a2be2"/>
<text x="609.6" y="456.6" font-family="'Liberation Sans', sans-serif" font-size="9" fill="#222" stroke="#222" stroke-width="0.18">CIV</text>
<rect x="641.7" y="449.9" width="16.9" height="6.5" fill="#800080"/>
<text x="664.7" y="456.6" font-family="'Liberation Sans', sans-serif" font-size="9" fill="#222" stroke="#222" stroke-width="0.18">CIII</text>
<rect x="693" y="449.9" width="16.9" height="6.5" fill="#ff00ff"/>
<text x="716.6" y="456.6" font-family="'Liberation Sans', sans-serif" font-size="9" fill="#222" stroke="#222" stroke-width="0.18">MgII</text>
<rect x="749" y="449.9" width="16.9" height="6.5" fill="#ffa500"/>
<text x="772.3" y="456.6" font-family="'Liberation Sans', sans-serif" font-size="9" fill="#222" stroke="#222" stroke-width="0.18">HeII</text>
<rect x="804" y="449.9" width="16.9" height="6.5" fill="#87ceeb"/>
<text x="826.8" y="456.6" font-family="'Liberation Sans', sans-serif" font-size="9" fill="#222" stroke="#222" stroke-width="0.18">(K)CaII</text>
<rect x="869.7" y="449.9" width="16.9" height="6.5" fill="#87ceeb"/>
<text x="892.6" y="456.6" font-family="'Liberation Sans', sans-serif" font-size="9" fill="#222" stroke="#222" stroke-width="0.18">(H)CaII</text>
<rect x="1047.7" y="60.5" width="251.29999999999995" height="150.8" fill="#fff"/>
<line x1="1047.7" y1="204.2" x2="1299.0" y2="204.2" stroke="#666" stroke-width="1.2"/>
<path d="M1068.4,122.3 L1069.6,122.3 L1070.7,122.3 L1071.9,122.3 L1073.1,122.3 L1074.2,122.3 L1075.4,122.3 L1076.5,122.3 L1077.7,122.3 L1078.9,122.3 L1080.0,122.3 L1081.2,122.3 L1082.4,122.3 L1083.5,122.3 L1084.7,122.3 L1085.9,122.3 L1087.0,122.3 L1088.2,122.3 L1089.4,122.3 L1090.5,122.3 L1091.7,122.3 L1092.9,122.3 L1094.0,122.3 L1095.2,122.3 L1096.4,122.3 L1097.5,122.3 L1098.7,122.3 L1099.9,122.3 L1101.0,122.3 L1102.2,122.3 L1103.4,122.3 L1104.5,122.3 L1105.7,122.3 L1106.9,122.3 L1108.0,122.3 L1109.2,122.3 L1110.4,122.3 L1111.5,122.3 L1112.7,122.3 L1113.9,122.3 L1115.0,122.3 L1116.2,122.3 L1117.4,122.3 L1118.5,122.3 L1119.7,122.3 L1120.8,122.3 L1122.0,122.3 L1123.2,122.3 L1124.3,122.3 L1125.5,122.3 L1126.7,122.3 L1127.8,122.3 L1129.0,122.3 L1130.2,122.3 L1131.3,122.3 L1132.5,122.3 L1133.7,122.3 L1134.8,122.3 L1136.0,122.3 L1137.2,122.3 L1138.3,122.3 L1139.5,122.3 L1140.7,122.3 L1141.8,122.3 L1143.0,122.3 L1144.2,122.3 L1145.3,122.3 L1146.5,122.3 L1147.7,122.3 L1148.8,122.3 L1150.0,122.3 L1151.2,122.3 L1152.3,122.3 L1153.5,122.3 L1154.7,122.3 L1155.8,122.3 L1157.0,122.3 L1158.2,122.3 L1159.3,122.2 L1160.5,122.1 L1161.6,121.7 L1162.8,121.1 L1164.0,120.1 L1165.1,118.3 L1166.3,115.7 L1167.5,112.0 L1168.6,107.2 L1169.8,101.5 L1171.0,95.4 L1172.1,89.6 L1173.3,85.1 L1174.5,82.4 L1175.6,82.2 L1176.8,84.4 L1178.0,88.6 L1179.1,94.2 L1180.3,100.3 L1181.5,106.1 L1182.6,111.1 L1183.8,115.0 L1185.0,117.9 L1186.1,119.8 L1187.3,121.0 L1188.5,121.6 L1189.6,122.0 L1190.8,122.2 L1192.0,122.3 L1193.1,122.3 L1194.3,122.3 L1195.5,122.3 L1196.6,122.3 L1197.8,122.3 L1199.0,122.3 L1200.1,122.3 L1201.3,122.3 L1202.5,122.3 L1203.6,122.3 L1204.8,122.3 L1205.9,122.3 L1207.1,122.3 L1208.3,122.3 L1209.4,122.3 L1210.6,122.3 L1211.8,122.3 L1212.9,122.3 L1214.1,122.3 L1215.3,122.3 L1216.4,122.3 L1217.6,122.3 L1218.8,122.3 L1219.9,122.3 L1221.1,122.3 L1222.3,122.3 L1223.4,122.3 L1224.6,122.3 L1225.8,122.3 L1226.9,122.3 L1228.1,122.3 L1229.3,122.3 L1230.4,122.3 L1231.6,122.3 L1232.8,122.3 L1233.9,122.3 L1235.1,122.3 L1236.3,122.3 L1237.4,122.3 L1238.6,122.3 L1239.8,122.3 L1240.9,122.3 L1242.1,122.3 L1243.3,122.3 L1244.4,122.3 L1245.6,122.3 L1246.7,122.3 L1247.9,122.3 L1249.1,122.3 L1250.2,122.3 L1251.4,122.3 L1252.6,122.3 L1253.7,122.3 L1254.9,122.3 L1256.1,122.3 L1257.2,122.3 L1258.4,122.3 L1259.6,122.3 L1260.7,122.3 L1261.9,122.3 L1263.1,122.3 L1264.2,122.3 L1265.4,122.3 L1266.6,122.3 L1267.7,122.3 L1268.9,122.3 L1270.1,122.3 L1271.2,122.3 L1272.4,122.3 L1273.6,122.3 L1274.7,122.3 L1275.9,122.3 L1277.1,122.3 L1278.2,122.3 L1279.4,122.3 L1280.6,122.3 L1281.7,122.3 L1282.9,122.3" fill="none" stroke="#333" stroke-width="1.9"/>
<path d="M1059.1,103.8 V122.3 M1063.7,91.7 V110.2 M1068.4,93.3 V111.9 M1073.1,84.9 V103.5 M1077.7,99.5 V118.1 M1082.4,109.6 V128.1 M1087.0,107.6 V126.2 M1091.7,98.2 V116.8 M1096.4,105.4 V124.0 M1101.0,111.3 V129.9 M1105.7,97.0 V115.6 M1110.4,106.3 V124.8 M1115.0,123.4 V142.0 M1119.7,109.6 V128.1 M1124.3,90.8 V109.3 M1129.0,92.5 V111.1 M1133.7,88.6 V107.2 M1138.3,113.1 V131.6 M1143.0,117.6 V136.2 M1147.7,119.7 V138.3 M1152.3,114.4 V132.9 M1157.0,119.7 V138.3 M1161.6,102.9 V121.5 M1166.3,104.9 V123.4 M1171.0,81.1 V99.6 M1175.6,68.3 V86.9 M1180.3,86.9 V105.4 M1185.0,102.1 V120.7 M1189.6,108.3 V126.8 M1194.3,104.5 V123.1 M1199.0,114.7 V133.3 M1203.6,127.2 V145.8 M1208.3,157.5 V174.9 M1212.9,142.9 V160.3 M1217.6,114.4 V132.9 M1222.3,98.2 V116.8 M1226.9,112.6 V131.2 M1231.6,119.7 V138.3 M1236.3,100.0 V118.5 M1240.9,89.8 V108.4 M1245.6,86.9 V105.4 M1250.2,89.8 V108.4 M1254.9,94.8 V113.4 M1259.6,115.0 V133.6 M1264.2,108.7 V127.2 M1268.9,119.7 V138.3 M1273.6,113.8 V132.4 M1278.2,108.7 V127.2 M1282.9,110.4 V129.0 M1287.6,127.8 V146.4" stroke="#1f77b4" stroke-width="1.6" fill="none"/>
<circle cx="1059.1" cy="113.1" r="2" fill="#1f77b4"/>
<circle cx="1063.7" cy="100.9" r="2" fill="#1f77b4"/>
<circle cx="1068.4" cy="102.6" r="2" fill="#1f77b4"/>
<circle cx="1073.1" cy="94.2" r="2" fill="#1f77b4"/>
<circle cx="1077.7" cy="108.8" r="2" fill="#1f77b4"/>
<circle cx="1082.4" cy="118.8" r="2" fill="#1f77b4"/>
<circle cx="1087.0" cy="116.9" r="2" fill="#1f77b4"/>
<circle cx="1091.7" cy="107.5" r="2" fill="#1f77b4"/>
<circle cx="1096.4" cy="114.7" r="2" fill="#1f77b4"/>
<circle cx="1101.0" cy="120.6" r="2" fill="#1f77b4"/>
<circle cx="1105.7" cy="106.3" r="2" fill="#1f77b4"/>
<circle cx="1110.4" cy="115.6" r="2" fill="#1f77b4"/>
<circle cx="1115.0" cy="132.7" r="2" fill="#1f77b4"/>
<circle cx="1119.7" cy="118.8" r="2" fill="#1f77b4"/>
<circle cx="1124.3" cy="100.1" r="2" fill="#1f77b4"/>
<circle cx="1129.0" cy="101.8" r="2" fill="#1f77b4"/>
<circle cx="1133.7" cy="97.9" r="2" fill="#1f77b4"/>
<circle cx="1138.3" cy="122.3" r="2" fill="#1f77b4"/>
<circle cx="1143.0" cy="126.9" r="2" fill="#1f77b4"/>
<circle cx="1147.7" cy="129.0" r="2" fill="#1f77b4"/>
<circle cx="1152.3" cy="123.6" r="2" fill="#1f77b4"/>
<circle cx="1157.0" cy="129.0" r="2" fill="#1f77b4"/>
<circle cx="1161.6" cy="112.2" r="2" fill="#1f77b4"/>
<circle cx="1166.3" cy="114.2" r="2" fill="#1f77b4"/>
<circle cx="1171.0" cy="90.4" r="2" fill="#1f77b4"/>
<circle cx="1175.6" cy="77.6" r="2" fill="#1f77b4"/>
<circle cx="1180.3" cy="96.1" r="2" fill="#1f77b4"/>
<circle cx="1185.0" cy="111.4" r="2" fill="#1f77b4"/>
<circle cx="1189.6" cy="117.5" r="2" fill="#1f77b4"/>
<circle cx="1194.3" cy="113.8" r="2" fill="#1f77b4"/>
<circle cx="1199.0" cy="124.0" r="2" fill="#1f77b4"/>
<circle cx="1203.6" cy="136.5" r="2" fill="#1f77b4"/>
<circle cx="1208.3" cy="166.2" r="2" fill="#1f77b4"/>
<circle cx="1212.9" cy="151.6" r="2" fill="#1f77b4"/>
<circle cx="1217.6" cy="123.6" r="2" fill="#1f77b4"/>
<circle cx="1222.3" cy="107.5" r="2" fill="#1f77b4"/>
<circle cx="1226.9" cy="121.9" r="2" fill="#1f77b4"/>
<circle cx="1231.6" cy="129.0" r="2" fill="#1f77b4"/>
<circle cx="1236.3" cy="109.2" r="2" fill="#1f77b4"/>
<circle cx="1240.9" cy="99.1" r="2" fill="#1f77b4"/>
<circle cx="1245.6" cy="96.1" r="2" fill="#1f77b4"/>
<circle cx="1250.2" cy="99.1" r="2" fill="#1f77b4"/>
<circle cx="1254.9" cy="104.1" r="2" fill="#1f77b4"/>
<circle cx="1259.6" cy="124.3" r="2" fill="#1f77b4"/>
<circle cx="1264.2" cy="118.0" r="2" fill="#1f77b4"/>
<circle cx="1268.9" cy="129.0" r="2" fill="#1f77b4"/>
<circle cx="1273.6" cy="123.1" r="2" fill="#1f77b4"/>
<circle cx="1278.2" cy="118.0" r="2" fill="#1f77b4"/>
<circle cx="1282.9" cy="119.7" r="2" fill="#1f77b4"/>
<circle cx="1287.6" cy="137.1" r="2" fill="#1f77b4"/>
<rect x="1047.7" y="60.5" width="251.29999999999995" height="150.8" fill="none" stroke="#333" stroke-width="1"/>
<line x1="1054.4" y1="211.3" x2="1054.4" y2="214.8" stroke="#333" stroke-width="1"/>
<text x="1054.4" y="224.3" font-family="'Liberation Sans', sans-serif" font-size="10.0" text-anchor="middle" textLength="21.3" lengthAdjust="spacingAndGlyphs" stroke="#000" stroke-width="0.18">4160</text>
<line x1="1101.0" y1="211.3" x2="1101.0" y2="214.8" stroke="#333" stroke-width="1"/>
<text x="1101.0" y="224.3" font-family="'Liberation Sans', sans-serif" font-size="10.0" text-anchor="middle" textLength="21.3" lengthAdjust="spacingAndGlyphs" stroke="#000" stroke-width="0.18">4180</text>
<line x1="1147.7" y1="211.3" x2="1147.7" y2="214.8" stroke="#333" stroke-width="1"/>
<text x="1147.7" y="224.3" font-family="'Liberation Sans', sans-serif" font-size="10.0" text-anchor="middle" textLength="21.3" lengthAdjust="spacingAndGlyphs" stroke="#000" stroke-width="0.18">4200</text>
<line x1="1194.3" y1="211.3" x2="1194.3" y2="214.8" stroke="#333" stroke-width="1"/>
<text x="1194.3" y="224.3" font-family="'Liberation Sans', sans-serif" font-size="10.0" text-anchor="middle" textLength="21.3" lengthAdjust="spacingAndGlyphs" stroke="#000" stroke-width="0.18">4220</text>
<line x1="1240.9" y1="211.3" x2="1240.9" y2="214.8" stroke="#333" stroke-width="1"/>
<text x="1240.9" y="224.3" font-family="'Liberation Sans', sans-serif" font-size="10.0" text-anchor="middle" textLength="21.3" lengthAdjust="spacingAndGlyphs" stroke="#000" stroke-width="0.18">4240</text>
<line x1="1287.6" y1="211.3" x2="1287.6" y2="214.8" stroke="#333" stroke-width="1"/>
<text x="1287.6" y="224.3" font-family="'Liberation Sans', sans-serif" font-size="10.0" text-anchor="middle" textLength="21.3" lengthAdjust="spacingAndGlyphs" stroke="#000" stroke-width="0.18">4260</text>
<line x1="1044.2" y1="204.2" x2="1047.7" y2="204.2" stroke="#333" stroke-width="1"/>
<text x="1041.2" y="207.6" font-family="'Liberation Sans', sans-serif" font-size="10.0" text-anchor="end" textLength="5.4" lengthAdjust="spacingAndGlyphs" stroke="#000" stroke-width="0.18">0</text>
<line x1="1044.2" y1="182.4" x2="1047.7" y2="182.4" stroke="#333" stroke-width="1"/>
<text x="1041.2" y="185.8" font-family="'Liberation Sans', sans-serif" font-size="10.0" text-anchor="end" textLength="5.4" lengthAdjust="spacingAndGlyphs" stroke="#000" stroke-width="0.18">2</text>
<line x1="1044.2" y1="160.5" x2="1047.7" y2="160.5" stroke="#333" stroke-width="1"/>
<text x="1041.2" y="163.9" font-family="'Liberation Sans', sans-serif" font-size="10.0" text-anchor="end" textLength="5.4" lengthAdjust="spacingAndGlyphs" stroke="#000" stroke-width="0.18">4</text>
<line x1="1044.2" y1="138.7" x2="1047.7" y2="138.7" stroke="#333" stroke-width="1"/>
<text x="1041.2" y="142.1" font-family="'Liberation Sans', sans-serif" font-size="10.0" text-anchor="end" textLength="5.4" lengthAdjust="spacingAndGlyphs" stroke="#000" stroke-width="0.18">6</text>
<line x1="1044.2" y1="116.9" x2="1047.7" y2="116.9" stroke="#333" stroke-width="1"/>
<text x="1041.2" y="120.3" font-family="'Liberation Sans', sans-serif" font-size="10.0" text-anchor="end" textLength="5.4" lengthAdjust="spacingAndGlyphs" stroke="#000" stroke-width="0.18">8</text>
<line x1="1044.2" y1="95.0" x2="1047.7" y2="95.0" stroke="#333" stroke-width="1"/>
<text x="1041.2" y="98.5" font-family="'Liberation Sans', sans-serif" font-size="10.0" text-anchor="end" textLength="11.2" lengthAdjust="spacingAndGlyphs" stroke="#000" stroke-width="0.18">10</text>
<line x1="1044.2" y1="73.2" x2="1047.7" y2="73.2" stroke="#333" stroke-width="1"/>
<text x="1041.2" y="76.6" font-family="'Liberation Sans', sans-serif" font-size="10.0" text-anchor="end" textLength="11.2" lengthAdjust="spacingAndGlyphs" stroke="#000" stroke-width="0.18">12</text>
<text x="1049.5" y="71.1" font-family="'Liberation Sans', sans-serif" font-size="10.2" stroke="#000" stroke-width="0.18">e<tspan dy="-3.5" font-size="7">−17</tspan><tspan dy="3.5">x2Å</tspan></text>
<filter id="nzA" x="0" y="0" width="100%" height="100%" color-interpolation-filters="sRGB"><feTurbulence type="fractalNoise" baseFrequency="0.45" numOctaves="1" seed="2" result="t"/><feColorMatrix in="t" type="matrix" values="1 0 0 0 0 1 0 0 0 0 1 0 0 0 0 0 0 0 0 1" result="g"/><feComposite in="SourceGraphic" in2="g" operator="arithmetic" k1="0" k2="1" k3="1.0" k4="-0.500"/></filter>
<filter id="nzB" x="0" y="0" width="100%" height="100%" color-interpolation-filters="sRGB"><feTurbulence type="fractalNoise" baseFrequency="0.42" numOctaves="1" seed="5" result="t"/><feColorMatrix in="t" type="matrix" values="1 0 0 0 0 1 0 0 0 0 1 0 0 0 0 0 0 0 0 1" result="g"/><feComposite in="SourceGraphic" in2="g" operator="arithmetic" k1="0" k2="1" k3="1.05" k4="-0.525"/></filter>
<filter id="nzS" x="0" y="0" width="100%" height="100%" color-interpolation-filters="sRGB"><feTurbulence type="fractalNoise" baseFrequency="0.11 0.045" numOctaves="2" seed="9" result="t"/><feColorMatrix in="t" type="matrix" values="1 0 0 0 0 1 0 0 0 0 1 0 0 0 0 0 0 0 0 1" result="g"/><feComposite in="SourceGraphic" in2="g" operator="arithmetic" k1="0" k2="1" k3="0.6" k4="-0.300"/></filter>
<filter id="nzSW" x="0" y="0" width="100%" height="100%" color-interpolation-filters="sRGB"><feTurbulence type="fractalNoise" baseFrequency="0.11 0.045" numOctaves="2" seed="17" result="t"/><feColorMatrix in="t" type="matrix" values="1 0 0 0 0 1 0 0 0 0 1 0 0 0 0 0 0 0 0 1" result="g"/><feComposite in="SourceGraphic" in2="g" operator="arithmetic" k1="0" k2="1" k3="0.3" k4="-0.150"/></filter>
<filter id="nzF" x="0" y="0" width="100%" height="100%" color-interpolation-filters="sRGB"><feTurbulence type="fractalNoise" baseFrequency="0.7" numOctaves="1" seed="4" result="t"/><feColorMatrix in="t" type="matrix" values="1 0 0 0 0 1 0 0 0 0 1 0 0 0 0 0 0 0 0 1" result="g"/><feComposite in="SourceGraphic" in2="g" operator="arithmetic" k1="0" k2="1" k3="0.12" k4="-0.060"/></filter>
<filter id="nzW" x="0" y="0" width="100%" height="100%" color-interpolation-filters="sRGB"><feTurbulence type="fractalNoise" baseFrequency="0.42" numOctaves="1" seed="11" result="t"/><feColorMatrix in="t" type="matrix" values="1 0 0 0 0 1 0 0 0 0 1 0 0 0 0 0 0 0 0 1" result="g"/><feComposite in="SourceGraphic" in2="g" operator="arithmetic" k1="0" k2="1" k3="0.65" k4="-0.325"/></filter>
<filter id="nzC" x="0" y="0" width="100%" height="100%" color-interpolation-filters="sRGB"><feTurbulence type="fractalNoise" baseFrequency="0.75" numOctaves="1" seed="13" result="t"/><feColorMatrix in="t" type="matrix" values="1 0 0 0 0 1 0 0 0 0 1 0 0 0 0 0 0 0 0 1" result="g"/><feComposite in="SourceGraphic" in2="g" operator="arithmetic" k1="0" k2="1" k3="1.5" k4="-0.750"/></filter>
<text x="499.6" y="42" font-family="'Liberation Sans', sans-serif" font-size="8" textLength="31.2" lengthAdjust="spacingAndGlyphs" stroke="#000" stroke-width="0.1">2D Spec</text>
<text x="591.7" y="41.8" font-family="'Liberation Sans', sans-serif" font-size="8" textLength="33.9" lengthAdjust="spacingAndGlyphs" stroke="#000" stroke-width="0.1">Pixel Flat</text>
<text x="681.7" y="41.8" font-family="'Liberation Sans', sans-serif" font-size="8" textLength="38.6" lengthAdjust="spacingAndGlyphs" stroke="#000" stroke-width="0.1">Smoothed</text>
<rect x="466.3" y="45.9" width="282.8" height="39.2" fill="#000"/>
<rect x="468.8" y="47.8" width="278.1" height="35.6" fill="#fff"/>
<linearGradient id="g1" x1="0" y1="0" x2="0" y2="1"><stop offset="0.000" stop-color="rgb(180,180,180)"/><stop offset="0.300" stop-color="rgb(185,185,185)"/><stop offset="0.420" stop-color="rgb(125,125,125)"/><stop offset="0.650" stop-color="rgb(120,120,120)"/><stop offset="0.720" stop-color="rgb(195,195,195)"/><stop offset="0.820" stop-color="rgb(180,180,180)"/><stop offset="0.860" stop-color="rgb(55,55,55)"/><stop offset="1.000" stop-color="rgb(35,35,35)"/></linearGradient>
<rect x="472.0" y="47.8" width="87.0" height="35.6" fill="url(#g1)" filter="url(#nzW)"/>
<linearGradient id="g2" x1="0" y1="0" x2="0" y2="1"><stop offset="0.000" stop-color="rgb(165,165,165)"/><stop offset="0.350" stop-color="rgb(160,160,160)"/><stop offset="0.450" stop-color="rgb(85,85,85)"/><stop offset="0.620" stop-color="rgb(90,90,90)"/><stop offset="0.720" stop-color="rgb(140,140,140)"/><stop offset="0.820" stop-color="rgb(120,120,120)"/><stop offset="0.860" stop-color="rgb(15,15,15)"/><stop offset="1.000" stop-color="rgb(5,5,5)"/></linearGradient>
<rect x="657.7" y="47.8" width="86.9" height="35.6" fill="url(#g2)" filter="url(#nzSW)"/>
<text x="748.6" y="61.1" font-family="'Liberation Sans', sans-serif" font-size="7.6" textLength="36" lengthAdjust="spacingAndGlyphs">Weighted</text>
<text x="748.6" y="69.7" font-family="'Liberation Sans', sans-serif" font-size="7.6" textLength="18.5" lengthAdjust="spacingAndGlyphs">Sum</text>
<rect x="466.3" y="94.0" width="282.9" height="39.4" fill="#0000ff"/>
<rect x="468.8" y="96.0" width="278" height="35.8" fill="#fff"/>
<linearGradient id="g3" x1="0" y1="0" x2="0" y2="1"><stop offset="0.000" stop-color="rgb(150,150,150)"/><stop offset="0.850" stop-color="rgb(140,140,140)"/><stop offset="0.920" stop-color="rgb(80,80,80)"/><stop offset="1.000" stop-color="rgb(90,90,90)"/></linearGradient>
<rect x="470.3" y="96.0" width="90.0" height="35.8" fill="url(#g3)" filter="url(#nzB)"/>
<linearGradient id="g4" x1="0" y1="0" x2="0" y2="1"><stop offset="0.000" stop-color="rgb(128,128,128)"/><stop offset="1.000" stop-color="rgb(128,128,128)"/></linearGradient>
<rect x="564.0" y="96.0" width="89.9" height="35.8" fill="url(#g4)" filter="url(#nzF)"/>
<linearGradient id="g5" x1="0" y1="0" x2="0" y2="1"><stop offset="0.000" stop-color="rgb(135,135,135)"/><stop offset="0.300" stop-color="rgb(120,120,120)"/><stop offset="0.500" stop-color="rgb(100,100,100)"/><stop offset="0.700" stop-color="rgb(115,115,115)"/><stop offset="0.880" stop-color="rgb(65,65,65)"/><stop offset="1.000" stop-color="rgb(45,45,45)"/></linearGradient>
<rect x="657.4" y="96.0" width="88.6" height="35.8" fill="url(#g5)" filter="url(#nzS)"/>
<text x="446.8" y="105.4" font-family="'Liberation Sans', sans-serif" font-size="7.4" fill="#222" textLength="16.4" lengthAdjust="spacingAndGlyphs">0.30</text>
<text x="446.8" y="114.4" font-family="'Liberation Sans', sans-serif" font-size="7.4" fill="#222" textLength="16.4" lengthAdjust="spacingAndGlyphs">1.99</text>
<text x="446.8" y="123.3" font-family="'Liberation Sans', sans-serif" font-size="7.4" fill="#222" textLength="12.3" lengthAdjust="spacingAndGlyphs">376</text>
<text x="751.2" y="99.6" font-family="'Liberation Sans', sans-serif" font-size="5.8" fill="#222" textLength="14.5" lengthAdjust="spacingAndGlyphs">0.75"</text>
<text x="751.2" y="107.0" font-family="'Liberation Sans', sans-serif" font-size="5.8" fill="#222" textLength="26.5" lengthAdjust="spacingAndGlyphs">(363, 667)</text>
<text x="751.2" y="115.3" font-family="'Liberation Sans', sans-serif" font-size="5.8" fill="#222" textLength="26.0" lengthAdjust="spacingAndGlyphs">20200414</text>
<text x="751.2" y="121.7" font-family="'Liberation Sans', sans-serif" font-size="5.8" fill="#222" textLength="21.5" lengthAdjust="spacingAndGlyphs">v016_02</text>
<text x="751.2" y="128.8" font-family="'Liberation Sans', sans-serif" font-size="5.8" fill="#222" textLength="34.7" lengthAdjust="spacingAndGlyphs">317_RU_073</text>
<rect x="466.3" y="133.4" width="282.9" height="39.4" fill="#00ff00"/>
<rect x="468.8" y="135.4" width="278" height="35.8" fill="#fff"/>
<linearGradient id="g6" x1="0" y1="0" x2="0" y2="1"><stop offset="0.000" stop-color="rgb(180,180,180)"/><stop offset="0.350" stop-color="rgb(175,175,175)"/><stop offset="0.420" stop-color="rgb(130,130,130)"/><stop offset="0.620" stop-color="rgb(125,125,125)"/><stop offset="0.700" stop-color="rgb(175,175,175)"/><stop offset="0.780" stop-color="rgb(165,165,165)"/><stop offset="0.820" stop-color="rgb(45,45,45)"/><stop offset="1.000" stop-color="rgb(35,35,35)"/></linearGradient>
<rect x="470.3" y="135.4" width="90.0" height="35.8" fill="url(#g6)" filter="url(#nzB)"/>
<linearGradient id="g7" x1="0" y1="0" x2="0" y2="1"><stop offset="0.000" stop-color="rgb(128,128,128)"/><stop offset="1.000" stop-color="rgb(128,128,128)"/></linearGradient>
<rect x="564.0" y="135.4" width="89.9" height="35.8" fill="url(#g7)" filter="url(#nzF)"/>
<linearGradient id="g8" x1="0" y1="0" x2="0" y2="1"><stop offset="0.000" stop-color="rgb(165,165,165)"/><stop offset="0.400" stop-color="rgb(150,150,150)"/><stop offset="0.480" stop-color="rgb(75,75,75)"/><stop offset="0.620" stop-color="rgb(80,80,80)"/><stop offset="0.700" stop-color="rgb(120,120,120)"/><stop offset="0.800" stop-color="rgb(110,110,110)"/><stop offset="0.830" stop-color="rgb(10,10,10)"/><stop offset="1.000" stop-color="rgb(5,5,5)"/></linearGradient>
<rect x="657.4" y="135.4" width="88.6" height="35.8" fill="url(#g8)" filter="url(#nzS)"/>
<text x="446.8" y="144.8" font-family="'Liberation Sans', sans-serif" font-size="7.4" fill="#222" textLength="16.4" lengthAdjust="spacingAndGlyphs">0.18</text>
<text x="446.8" y="153.8" font-family="'Liberation Sans', sans-serif" font-size="7.4" fill="#222" textLength="16.4" lengthAdjust="spacingAndGlyphs">1.66</text>
<text x="446.8" y="162.7" font-family="'Liberation Sans', sans-serif" font-size="7.4" fill="#222" textLength="12.3" lengthAdjust="spacingAndGlyphs">377</text>
<text x="751.2" y="139.0" font-family="'Liberation Sans', sans-serif" font-size="5.8" fill="#222" textLength="14.5" lengthAdjust="spacingAndGlyphs">0.82"</text>
<text x="751.2" y="146.4" font-family="'Liberation Sans', sans-serif" font-size="5.8" fill="#222" textLength="26.5" lengthAdjust="spacingAndGlyphs">(364, 658)</text>
<text x="751.2" y="154.7" font-family="'Liberation Sans', sans-serif" font-size="5.8" fill="#222" textLength="26.0" lengthAdjust="spacingAndGlyphs">20200414</text>
<text x="751.2" y="161.1" font-family="'Liberation Sans', sans-serif" font-size="5.8" fill="#222" textLength="21.5" lengthAdjust="spacingAndGlyphs">v016_01</text>
<text x="751.2" y="168.2" font-family="'Liberation Sans', sans-serif" font-size="5.8" fill="#222" textLength="34.7" lengthAdjust="spacingAndGlyphs">317_RU_072</text>
<rect x="466.3" y="172.9" width="282.9" height="39.4" fill="#ffa500"/>
<rect x="468.8" y="174.9" width="278" height="35.8" fill="#fff"/>
<linearGradient id="g9" x1="0" y1="0" x2="0" y2="1"><stop offset="0.000" stop-color="rgb(140,140,140)"/><stop offset="0.850" stop-color="rgb(135,135,135)"/><stop offset="1.000" stop-color="rgb(95,95,95)"/></linearGradient>
<rect x="470.3" y="174.9" width="90.0" height="35.8" fill="url(#g9)" filter="url(#nzB)"/>
<linearGradient id="g10" x1="0" y1="0" x2="0" y2="1"><stop offset="0.000" stop-color="rgb(128,128,128)"/><stop offset="1.000" stop-color="rgb(128,128,128)"/></linearGradient>
<rect x="564.0" y="174.9" width="89.9" height="35.8" fill="url(#g10)" filter="url(#nzF)"/>
<linearGradient id="g11" x1="0" y1="0" x2="0" y2="1"><stop offset="0.000" stop-color="rgb(130,130,130)"/><stop offset="0.500" stop-color="rgb(115,115,115)"/><stop offset="0.850" stop-color="rgb(100,100,100)"/><stop offset="1.000" stop-color="rgb(60,60,60)"/></linearGradient>
<rect x="657.4" y="174.9" width="88.6" height="35.8" fill="url(#g11)" filter="url(#nzS)"/>
<text x="446.8" y="184.3" font-family="'Liberation Sans', sans-serif" font-size="7.4" fill="#222" textLength="16.4" lengthAdjust="spacingAndGlyphs">0.13</text>
<text x="446.8" y="193.2" font-family="'Liberation Sans', sans-serif" font-size="7.4" fill="#222" textLength="16.4" lengthAdjust="spacingAndGlyphs">1.29</text>
<text x="446.8" y="202.2" font-family="'Liberation Sans', sans-serif" font-size="7.4" fill="#222" textLength="12.3" lengthAdjust="spacingAndGlyphs">357</text>
<text x="751.2" y="178.5" font-family="'Liberation Sans', sans-serif" font-size="5.8" fill="#222" textLength="14.5" lengthAdjust="spacingAndGlyphs">1.09"</text>
<text x="751.2" y="185.9" font-family="'Liberation Sans', sans-serif" font-size="5.8" fill="#222" textLength="26.5" lengthAdjust="spacingAndGlyphs">(363, 841)</text>
<text x="751.2" y="194.2" font-family="'Liberation Sans', sans-serif" font-size="5.8" fill="#222" textLength="26.0" lengthAdjust="spacingAndGlyphs">20200414</text>
<text x="751.2" y="200.6" font-family="'Liberation Sans', sans-serif" font-size="5.8" fill="#222" textLength="21.5" lengthAdjust="spacingAndGlyphs">v016_03</text>
<text x="751.2" y="207.7" font-family="'Liberation Sans', sans-serif" font-size="5.8" fill="#222" textLength="34.7" lengthAdjust="spacingAndGlyphs">317_RU_092</text>
<rect x="466.3" y="212.9" width="282.9" height="39.4" fill="#ff0000"/>
<rect x="468.8" y="214.9" width="278" height="35.8" fill="#fff"/>
<linearGradient id="g12" x1="0" y1="0" x2="0" y2="1"><stop offset="0.000" stop-color="rgb(180,180,180)"/><stop offset="0.350" stop-color="rgb(170,170,170)"/><stop offset="0.420" stop-color="rgb(125,125,125)"/><stop offset="0.600" stop-color="rgb(120,120,120)"/><stop offset="0.680" stop-color="rgb(170,170,170)"/><stop offset="0.800" stop-color="rgb(165,165,165)"/><stop offset="0.860" stop-color="rgb(60,60,60)"/><stop offset="1.000" stop-color="rgb(45,45,45)"/></linearGradient>
<rect x="470.3" y="214.9" width="90.0" height="35.8" fill="url(#g12)" filter="url(#nzB)"/>
<linearGradient id="g13" x1="0" y1="0" x2="0" y2="1"><stop offset="0.000" stop-color="rgb(128,128,128)"/><stop offset="1.000" stop-color="rgb(128,128,128)"/></linearGradient>
<rect x="564.0" y="214.9" width="89.9" height="35.8" fill="url(#g13)" filter="url(#nzF)"/>
<linearGradient id="g14" x1="0" y1="0" x2="0" y2="1"><stop offset="0.000" stop-color="rgb(165,165,165)"/><stop offset="0.400" stop-color="rgb(150,150,150)"/><stop offset="0.500" stop-color="rgb(70,70,70)"/><stop offset="0.650" stop-color="rgb(75,75,75)"/><stop offset="0.720" stop-color="rgb(115,115,115)"/><stop offset="0.840" stop-color="rgb(105,105,105)"/><stop offset="0.880" stop-color="rgb(10,10,10)"/><stop offset="1.000" stop-color="rgb(5,5,5)"/></linearGradient>
<rect x="657.4" y="214.9" width="88.6" height="35.8" fill="url(#g14)" filter="url(#nzS)"/>
<text x="446.8" y="224.3" font-family="'Liberation Sans', sans-serif" font-size="7.4" fill="#222" textLength="16.4" lengthAdjust="spacingAndGlyphs">0.11</text>
<text x="446.8" y="233.2" font-family="'Liberation Sans', sans-serif" font-size="7.4" fill="#222" textLength="16.4" lengthAdjust="spacingAndGlyphs">1.79</text>
<text x="446.8" y="242.2" font-family="'Liberation Sans', sans-serif" font-size="7.4" fill="#222" textLength="12.3" lengthAdjust="spacingAndGlyphs">376</text>
<text x="751.2" y="218.5" font-family="'Liberation Sans', sans-serif" font-size="5.8" fill="#222" textLength="14.5" lengthAdjust="spacingAndGlyphs">1.47"</text>
<text x="751.2" y="225.9" font-family="'Liberation Sans', sans-serif" font-size="5.8" fill="#222" textLength="26.5" lengthAdjust="spacingAndGlyphs">(363, 667)</text>
<text x="751.2" y="234.2" font-family="'Liberation Sans', sans-serif" font-size="5.8" fill="#222" textLength="26.0" lengthAdjust="spacingAndGlyphs">20200414</text>
<text x="751.2" y="240.6" font-family="'Liberation Sans', sans-serif" font-size="5.8" fill="#222" textLength="21.5" lengthAdjust="spacingAndGlyphs">v016_03</text>
<text x="751.2" y="247.7" font-family="'Liberation Sans', sans-serif" font-size="5.8" fill="#222" textLength="34.7" lengthAdjust="spacingAndGlyphs">317_RU_073</text>
<text x="865.3" y="47.4" font-family="'Liberation Sans', sans-serif" font-size="9.8" text-anchor="middle" textLength="42.5" lengthAdjust="spacingAndGlyphs" stroke="#000" stroke-width="0.18">With Sky</text>
<text x="865.3" y="57.8" font-family="'Liberation Sans', sans-serif" font-size="9.8" text-anchor="middle" textLength="66.4" lengthAdjust="spacingAndGlyphs" stroke="#000" stroke-width="0.18">x, y: 363, 667</text>
<text x="965.9" y="47.4" font-family="'Liberation Sans', sans-serif" font-size="9.8" text-anchor="middle" textLength="62.3" lengthAdjust="spacingAndGlyphs" stroke="#000" stroke-width="0.18">Clean Image</text>
<text x="965.9" y="57.8" font-family="'Liberation Sans', sans-serif" font-size="9.8" text-anchor="middle" textLength="66.8" lengthAdjust="spacingAndGlyphs" stroke="#000" stroke-width="0.18">x, y: 363, 667</text>
<rect x="830.6" y="63" width="69.4" height="172" fill="#0000ff"/>
<linearGradient id="g15" x1="0" y1="0" x2="0" y2="1"><stop offset="0.000" stop-color="rgb(225,225,225)"/><stop offset="0.042" stop-color="rgb(228,228,228)"/><stop offset="0.076" stop-color="rgb(110,110,110)"/><stop offset="0.104" stop-color="rgb(228,228,228)"/><stop offset="0.109" stop-color="rgb(228,228,228)"/><stop offset="0.137" stop-color="rgb(105,105,105)"/><stop offset="0.170" stop-color="rgb(228,228,228)"/><stop offset="0.170" stop-color="rgb(228,228,228)"/><stop offset="0.204" stop-color="rgb(100,100,100)"/><stop offset="0.237" stop-color="rgb(245,245,245)"/><stop offset="0.326" stop-color="rgb(245,245,245)"/><stop offset="0.360" stop-color="rgb(100,100,100)"/><stop offset="0.393" stop-color="rgb(228,228,228)"/><stop offset="0.393" stop-color="rgb(228,228,228)"/><stop offset="0.426" stop-color="rgb(95,95,95)"/><stop offset="0.460" stop-color="rgb(228,228,228)"/><stop offset="0.465" stop-color="rgb(228,228,228)"/><stop offset="0.498" stop-color="rgb(80,80,80)"/><stop offset="0.532" stop-color="rgb(228,228,228)"/><stop offset="0.543" stop-color="rgb(228,228,228)"/><stop offset="0.576" stop-color="rgb(70,70,70)"/><stop offset="0.610" stop-color="rgb(228,228,228)"/><stop offset="0.615" stop-color="rgb(228,228,228)"/><stop offset="0.649" stop-color="rgb(75,75,75)"/><stop offset="0.682" stop-color="rgb(228,228,228)"/><stop offset="0.682" stop-color="rgb(228,228,228)"/><stop offset="0.715" stop-color="rgb(95,95,95)"/><stop offset="0.748" stop-color="rgb(228,228,228)"/><stop offset="0.754" stop-color="rgb(228,228,228)"/><stop offset="0.788" stop-color="rgb(105,105,105)"/><stop offset="0.821" stop-color="rgb(228,228,228)"/><stop offset="0.826" stop-color="rgb(228,228,228)"/><stop offset="0.860" stop-color="rgb(110,110,110)"/><stop offset="0.893" stop-color="rgb(228,228,228)"/><stop offset="0.904" stop-color="rgb(228,228,228)"/><stop offset="0.938" stop-color="rgb(110,110,110)"/><stop offset="0.971" stop-color="rgb(228,228,228)"/><stop offset="1.000" stop-color="rgb(225,225,225)"/></linearGradient>
<rect x="832.6" y="65.0" width="65.4" height="168.0" fill="url(#g15)" filter="url(#nzA)"/>
<rect x="931" y="63" width="70.2" height="172" fill="#0000ff"/>
<linearGradient id="g16" x1="0" y1="0" x2="0" y2="1"><stop offset="0.000" stop-color="rgb(165,165,165)"/><stop offset="0.238" stop-color="rgb(165,165,165)"/><stop offset="0.250" stop-color="rgb(165,165,165)"/><stop offset="0.324" stop-color="rgb(165,165,165)"/><stop offset="0.327" stop-color="rgb(160,160,160)"/><stop offset="0.518" stop-color="rgb(158,158,158)"/><stop offset="0.577" stop-color="rgb(110,110,110)"/><stop offset="0.613" stop-color="rgb(150,150,150)"/><stop offset="0.649" stop-color="rgb(115,115,115)"/><stop offset="0.690" stop-color="rgb(158,158,158)"/><stop offset="1.000" stop-color="rgb(165,165,165)"/></linearGradient>
<rect x="933.0" y="65.0" width="66.2" height="168.0" fill="url(#g16)" filter="url(#nzC)"/>
<rect x="933" y="107" width="66.2" height="12.5" fill="#a0a0a0"/>
<linearGradient id="tailg"><stop offset="0" stop-color="#707070"/><stop offset="0.6" stop-color="#808080"/><stop offset="1" stop-color="#e0e0e0"/></linearGradient>
<filter id="blur1" x="-30%" y="-30%" width="160%" height="160%"><feGaussianBlur stdDeviation="1.2"/></filter>
<filter id="blur3" x="-50%" y="-50%" width="200%" height="200%"><feGaussianBlur stdDeviation="3.5"/></filter>
<filter id="blur6" x="-50%" y="-50%" width="200%" height="200%"><feGaussianBlur stdDeviation="6"/></filter>
<linearGradient id="streak" x1="0" y1="0" x2="0" y2="1"><stop offset="0" stop-color="#ebebeb"/><stop offset="0.2" stop-color="#e3e3e3"/><stop offset="0.35" stop-color="#e8e8e8"/><stop offset="0.5" stop-color="#dedede"/><stop offset="0.62" stop-color="#ececec"/><stop offset="0.8" stop-color="#dcdcdc"/><stop offset="1" stop-color="#e2e2e2"/></linearGradient>
<clipPath id="cp1"><rect x="70.7" y="532.6" width="147.89999999999998" height="147.79999999999995"/></clipPath>
<clipPath id="cp1u"><rect x="70.7" y="532.6" width="147.89999999999998" height="113.4"/></clipPath>
<g clip-path="url(#cp1)">
<rect x="70.7" y="532.6" width="147.89999999999998" height="147.79999999999995" fill="#f3f3f3" filter="url(#nzF)"/>
<rect x="70.7" y="646.0" width="147.89999999999998" height="34.4" fill="url(#streak)"/>
<rect x="70.7" y="646.0" width="78.4" height="2.5" fill="url(#tailg)"/>
<rect x="70.7" y="648.5" width="40.8" height="2.5" fill="#cfcfcf"/>
<ellipse cx="154.0" cy="678.7" rx="9.8" ry="1.6" fill="#a8a8a8" filter="url(#blur1)"/>
<ellipse cx="176.9" cy="670.6" rx="16.4" ry="2" fill="#d4d4d4" filter="url(#blur3)"/>
</g>
<g clip-path="url(#cp1u)">
<path d="M65.7,590.4 L95.1,593.7 L114.8,605.2 L131.1,619.9 L143.4,636.2 L149.1,649.3 L65.7,649.3Z" fill="#cfcfcf" filter="url(#blur6)"/>
<path d="M65.7,603.5 L91.9,606.0 L109.9,614.2 L120.5,622.3 L128.7,633.0 L135.2,642.8 L137.7,649.3 L65.7,649.3Z" fill="#8a8a8a" filter="url(#blur3)"/>
<path d="M65.7,616.3 L93.5,616.3 L106.6,620.7 L114.3,626.4 L121.5,633.9 L127.4,641.5 L130.3,645.2 L131.1,649.3 L65.7,649.3Z" fill="#000" filter="url(#blur1)"/>
<path d="M118.0,641.1 L139.3,643.6 L144.2,647.7 L118.0,647.7Z" fill="#303030" filter="url(#blur1)"/>
</g>
<rect x="94.4" y="557.5" width="99.2" height="98.4" fill="none" stroke="#ff0000" stroke-width="1.3"/>
<circle cx="107.5" cy="568.6" r="11.9" fill="none" stroke="#777" stroke-width="0.9"/>
<circle cx="131.1" cy="568.6" r="11.9" fill="none" stroke="#777" stroke-width="0.9"/>
<circle cx="155.3" cy="568.6" r="11.9" fill="none" stroke="#777" stroke-width="0.9"/>
<circle cx="179.9" cy="568.6" r="11.9" fill="none" stroke="#777" stroke-width="0.9"/>
<circle cx="94.4" cy="589" r="11.9" fill="none" stroke="#777" stroke-width="0.9"/>
<circle cx="118.8" cy="589" r="11.9" fill="none" stroke="#777" stroke-width="0.9"/>
<circle cx="167.6" cy="589" r="11.9" fill="none" stroke="#777" stroke-width="0.9"/>
<circle cx="191.7" cy="589" r="11.9" fill="none" stroke="#777" stroke-width="0.9"/>
<circle cx="107" cy="610.3" r="11.9" fill="none" stroke="#777" stroke-width="0.9"/>
<circle cx="180.2" cy="610.3" r="11.9" fill="none" stroke="#777" stroke-width="0.9"/>
<circle cx="95.2" cy="630.7" r="11.9" fill="none" stroke="#777" stroke-width="0.9"/>
<circle cx="119.6" cy="630.7" r="11.9" fill="none" stroke="#777" stroke-width="0.9"/>
<circle cx="167.9" cy="630.7" r="11.9" fill="none" stroke="#777" stroke-width="0.9"/>
<circle cx="191.7" cy="630.7" r="11.9" fill="none" stroke="#777" stroke-width="0.9"/>
<circle cx="131.4" cy="652.5" r="11.9" fill="none" stroke="#777" stroke-width="0.9"/>
<circle cx="155.8" cy="652.5" r="11.9" fill="none" stroke="#777" stroke-width="0.9"/>
<circle cx="143.5" cy="589" r="11.9" fill="none" stroke="#ffa500" stroke-width="1.4"/>
<circle cx="131.4" cy="609.9" r="11.9" fill="none" stroke="#00ff00" stroke-width="1.4"/>
<circle cx="155.8" cy="610.7" r="11.9" fill="none" stroke="#0000ff" stroke-width="1.4"/>
<circle cx="144" cy="630.7" r="11.9" fill="none" stroke="#ff0000" stroke-width="1.4"/>
<path d="M140,606.3 H148 M144,602.3 V610.3" stroke="#ff0000" stroke-width="1.2"/>
<text x="144" y="546" font-family="'Liberation Sans', sans-serif" font-size="10.3" fill="#ff0000" text-anchor="middle" stroke="#ff0000" stroke-width="0.18">N</text>
<text x="80.3" y="609.9" font-family="'Liberation Sans', sans-serif" font-size="10.3" fill="#ff0000" text-anchor="middle" stroke="#ff0000" stroke-width="0.18">E</text>
<line x1="78.8" y1="680.4" x2="78.8" y2="683.9" stroke="#222" stroke-width="1"/>
<text x="78.6" y="695.7" font-family="'Liberation Sans', sans-serif" font-size="10.3" text-anchor="middle" textLength="13.6" lengthAdjust="spacingAndGlyphs" stroke="#000" stroke-width="0.18">−4</text>
<line x1="67.2" y1="672.2" x2="70.7" y2="672.2" stroke="#222" stroke-width="1"/>
<text x="61.7" y="675.8" font-family="'Liberation Sans', sans-serif" font-size="10.3" text-anchor="end" textLength="13.6" lengthAdjust="spacingAndGlyphs" stroke="#000" stroke-width="0.18">−4</text>
<line x1="111.5" y1="680.4" x2="111.5" y2="683.9" stroke="#222" stroke-width="1"/>
<text x="111.3" y="695.7" font-family="'Liberation Sans', sans-serif" font-size="10.3" text-anchor="middle" textLength="13.6" lengthAdjust="spacingAndGlyphs" stroke="#000" stroke-width="0.18">−2</text>
<line x1="67.2" y1="639.5" x2="70.7" y2="639.5" stroke="#222" stroke-width="1"/>
<text x="61.7" y="643.1" font-family="'Liberation Sans', sans-serif" font-size="10.3" text-anchor="end" textLength="13.6" lengthAdjust="spacingAndGlyphs" stroke="#000" stroke-width="0.18">−2</text>
<line x1="144.2" y1="680.4" x2="144.2" y2="683.9" stroke="#222" stroke-width="1"/>
<text x="144.2" y="695.7" font-family="'Liberation Sans', sans-serif" font-size="10.3" text-anchor="middle" textLength="5.6" lengthAdjust="spacingAndGlyphs" stroke="#000" stroke-width="0.18">0</text>
<line x1="67.2" y1="606.8" x2="70.7" y2="606.8" stroke="#222" stroke-width="1"/>
<text x="61.7" y="610.4" font-family="'Liberation Sans', sans-serif" font-size="10.3" text-anchor="end" textLength="5.6" lengthAdjust="spacingAndGlyphs" stroke="#000" stroke-width="0.18">0</text>
<line x1="176.9" y1="680.4" x2="176.9" y2="683.9" stroke="#222" stroke-width="1"/>
<text x="176.9" y="695.7" font-family="'Liberation Sans', sans-serif" font-size="10.3" text-anchor="middle" textLength="5.6" lengthAdjust="spacingAndGlyphs" stroke="#000" stroke-width="0.18">2</text>
<line x1="67.2" y1="574.1" x2="70.7" y2="574.1" stroke="#222" stroke-width="1"/>
<text x="61.7" y="577.7" font-family="'Liberation Sans', sans-serif" font-size="10.3" text-anchor="end" textLength="5.6" lengthAdjust="spacingAndGlyphs" stroke="#000" stroke-width="0.18">2</text>
<line x1="209.6" y1="680.4" x2="209.6" y2="683.9" stroke="#222" stroke-width="1"/>
<text x="209.6" y="695.7" font-family="'Liberation Sans', sans-serif" font-size="10.3" text-anchor="middle" textLength="5.6" lengthAdjust="spacingAndGlyphs" stroke="#000" stroke-width="0.18">4</text>
<line x1="67.2" y1="541.4" x2="70.7" y2="541.4" stroke="#222" stroke-width="1"/>
<text x="61.7" y="545.0" font-family="'Liberation Sans', sans-serif" font-size="10.3" text-anchor="end" textLength="5.6" lengthAdjust="spacingAndGlyphs" stroke="#000" stroke-width="0.18">4</text>
<rect x="70.7" y="532.6" width="147.89999999999998" height="147.79999999999995" fill="none" stroke="#222" stroke-width="1.1"/>
<text x="143.9" y="525.7" font-family="'Liberation Sans', sans-serif" font-size="12.6" text-anchor="middle" textLength="91.8" lengthAdjust="spacingAndGlyphs" stroke="#000" stroke-width="0.18">Fiber Positions</text>
<text x="144" y="706.4" font-family="'Liberation Sans', sans-serif" font-size="10.3" text-anchor="middle" textLength="40.7" lengthAdjust="spacingAndGlyphs" stroke="#000" stroke-width="0.18">arcsecs</text>
<clipPath id="cp2"><rect x="255.4" y="532.7" width="148.3" height="147.8"/></clipPath>
<g clip-path="url(#cp2)">
<rect x="255.4" y="532.7" width="148.3" height="147.8" fill="#440154"/>
<path d="M240,596 L292,614 L326,642 L342,690 L240,690Z" fill="#472d7b" filter="url(#blur3)"/>
<path d="M240,616 L281,627 L299,641 L316,662 L325,690 L240,690Z" fill="#3b528b" filter="url(#blur3)"/>
<path d="M240,628 L274,630 L290,643 L305,661 L311,690 L240,690Z" fill="#21918c" filter="url(#blur1)"/>
<path d="M255.4,635.1 L259.4,633 L271,632.5 L280.4,639.3 L294,653 L296.2,658.2 L302.5,670.8 L298.8,680.5 L255.4,680.5Z" fill="#fde725"/>
<path d="M255.4,635.1 L259.4,633 L271,632.5 L280.4,639.3 L294,653 L296.2,658.2 L302.5,670.8 L298.8,680.5" fill="none" stroke="#7ad151" stroke-width="1.4"/>
</g>
<rect x="280.3" y="557.7" width="98.7" height="98.1" fill="none" stroke="#ff0000" stroke-width="1.3"/>
<path d="M329.3,568.5 V599.7 M329.3,614.7 V644.3 M291.9,606.6 H321.9 M336.2,606.6 H367.9" stroke="#ff0000" stroke-width="1.3"/>
<text x="329.3" y="546" font-family="'Liberation Sans', sans-serif" font-size="10.3" fill="#ff0000" text-anchor="middle" stroke="#ff0000" stroke-width="0.18">N</text>
<text x="265.1" y="609.9" font-family="'Liberation Sans', sans-serif" font-size="10.3" fill="#ff0000" text-anchor="middle" stroke="#ff0000" stroke-width="0.18">E</text>
<line x1="264.0" y1="680.5" x2="264.0" y2="684.0" stroke="#222" stroke-width="1"/>
<text x="263.8" y="695.7" font-family="'Liberation Sans', sans-serif" font-size="10.3" text-anchor="middle" textLength="13.6" lengthAdjust="spacingAndGlyphs" stroke="#000" stroke-width="0.18">−4</text>
<line x1="251.9" y1="672.0" x2="255.4" y2="672.0" stroke="#222" stroke-width="1"/>
<text x="246.4" y="675.6" font-family="'Liberation Sans', sans-serif" font-size="10.3" text-anchor="end" textLength="13.6" lengthAdjust="spacingAndGlyphs" stroke="#000" stroke-width="0.18">−4</text>
<line x1="296.7" y1="680.5" x2="296.7" y2="684.0" stroke="#222" stroke-width="1"/>
<text x="296.5" y="695.7" font-family="'Liberation Sans', sans-serif" font-size="10.3" text-anchor="middle" textLength="13.6" lengthAdjust="spacingAndGlyphs" stroke="#000" stroke-width="0.18">−2</text>
<line x1="251.9" y1="639.3" x2="255.4" y2="639.3" stroke="#222" stroke-width="1"/>
<text x="246.4" y="642.9" font-family="'Liberation Sans', sans-serif" font-size="10.3" text-anchor="end" textLength="13.6" lengthAdjust="spacingAndGlyphs" stroke="#000" stroke-width="0.18">−2</text>
<line x1="329.4" y1="680.5" x2="329.4" y2="684.0" stroke="#222" stroke-width="1"/>
<text x="329.4" y="695.7" font-family="'Liberation Sans', sans-serif" font-size="10.3" text-anchor="middle" textLength="5.6" lengthAdjust="spacingAndGlyphs" stroke="#000" stroke-width="0.18">0</text>
<line x1="251.9" y1="606.6" x2="255.4" y2="606.6" stroke="#222" stroke-width="1"/>
<text x="246.4" y="610.2" font-family="'Liberation Sans', sans-serif" font-size="10.3" text-anchor="end" textLength="5.6" lengthAdjust="spacingAndGlyphs" stroke="#000" stroke-width="0.18">0</text>
<line x1="362.1" y1="680.5" x2="362.1" y2="684.0" stroke="#222" stroke-width="1"/>
<text x="362.1" y="695.7" font-family="'Liberation Sans', sans-serif" font-size="10.3" text-anchor="middle" textLength="5.6" lengthAdjust="spacingAndGlyphs" stroke="#000" stroke-width="0.18">2</text>
<line x1="251.9" y1="573.9" x2="255.4" y2="573.9" stroke="#222" stroke-width="1"/>
<text x="246.4" y="577.5" font-family="'Liberation Sans', sans-serif" font-size="10.3" text-anchor="end" textLength="5.6" lengthAdjust="spacingAndGlyphs" stroke="#000" stroke-width="0.18">2</text>
<line x1="394.8" y1="680.5" x2="394.8" y2="684.0" stroke="#222" stroke-width="1"/>
<text x="394.8" y="695.7" font-family="'Liberation Sans', sans-serif" font-size="10.3" text-anchor="middle" textLength="5.6" lengthAdjust="spacingAndGlyphs" stroke="#000" stroke-width="0.18">4</text>
<line x1="251.9" y1="541.2" x2="255.4" y2="541.2" stroke="#222" stroke-width="1"/>
<text x="246.4" y="544.8" font-family="'Liberation Sans', sans-serif" font-size="10.3" text-anchor="end" textLength="5.6" lengthAdjust="spacingAndGlyphs" stroke="#000" stroke-width="0.18">4</text>
<text x="329.0" y="525.8" font-family="'Liberation Sans', sans-serif" font-size="12.6" text-anchor="middle" textLength="82.7" lengthAdjust="spacingAndGlyphs" stroke="#000" stroke-width="0.18">Lineflux Map</text>
<text x="328.8" y="707.1" font-family="'Liberation Sans', sans-serif" font-size="10.3" text-anchor="middle" textLength="100.5" lengthAdjust="spacingAndGlyphs" stroke="#000" stroke-width="0.18">s/b: 0.56 +/- 0.031</text>
<clipPath id="cp3"><rect x="440.8" y="532.7" width="147.8" height="147.79999999999995"/></clipPath>
<clipPath id="cp3u"><rect x="440.8" y="532.7" width="147.8" height="113.1"/></clipPath>
<g clip-path="url(#cp3)">
<rect x="440.8" y="532.7" width="147.8" height="147.79999999999995" fill="#f3f3f3" filter="url(#nzF)"/>
<rect x="440.8" y="645.8" width="147.8" height="34.7" fill="url(#streak)"/>
<rect x="440.8" y="645.8" width="78.8" height="2.5" fill="url(#tailg)"/>
<rect x="440.8" y="648.3" width="41.2" height="2.5" fill="#cfcfcf"/>
<ellipse cx="524.5" cy="678.5" rx="9.8" ry="1.6" fill="#a8a8a8" filter="url(#blur1)"/>
<ellipse cx="547.4" cy="670.4" rx="16.4" ry="2" fill="#d4d4d4" filter="url(#blur3)"/>
</g>
<g clip-path="url(#cp3u)">
<path d="M436.2,590.2 L465.7,593.5 L485.3,605.0 L501.6,619.7 L513.9,636.0 L519.6,649.1 L436.2,649.1Z" fill="#cfcfcf" filter="url(#blur6)"/>
<path d="M436.2,603.3 L462.4,605.8 L480.4,614.0 L491.0,622.1 L499.2,632.8 L505.7,642.6 L508.2,649.1 L436.2,649.1Z" fill="#8a8a8a" filter="url(#blur3)"/>
<path d="M436.2,616.1 L464.0,616.1 L477.1,620.5 L484.8,626.2 L492.0,633.7 L497.9,641.3 L500.8,645.0 L501.6,649.1 L436.2,649.1Z" fill="#000" filter="url(#blur1)"/>
<path d="M488.5,640.9 L509.8,643.4 L514.7,647.5 L488.5,647.5Z" fill="#303030" filter="url(#blur1)"/>
</g>
<rect x="465.5" y="557.7" width="98.1" height="98.1" fill="none" stroke="#ff0000" stroke-width="1.3"/>
<path d="M514.7,568.5 V599.7 M514.7,614.7 V644.3 M477.3,606.6 H507.3 M521.6,606.6 H553.3" stroke="#ff0000" stroke-width="1.3"/>
<clipPath id="cp3b"><rect x="440.8" y="532.7" width="147.8" height="147.8"/></clipPath>
<ellipse cx="473.2" cy="633.2" rx="50.5" ry="26.8" transform="rotate(9.25 473.2 633.2)" fill="none" stroke="#f0c419" stroke-width="1.4" clip-path="url(#cp3b)"/>
<text x="514.7" y="546" font-family="'Liberation Sans', sans-serif" font-size="10.3" fill="#ff0000" text-anchor="middle" stroke="#ff0000" stroke-width="0.18">N</text>
<text x="450.4" y="609.9" font-family="'Liberation Sans', sans-serif" font-size="10.3" fill="#ff0000" text-anchor="middle" stroke="#ff0000" stroke-width="0.18">E</text>
<line x1="449.3" y1="680.5" x2="449.3" y2="684.0" stroke="#222" stroke-width="1"/>
<text x="449.1" y="695.7" font-family="'Liberation Sans', sans-serif" font-size="10.3" text-anchor="middle" textLength="13.6" lengthAdjust="spacingAndGlyphs" stroke="#000" stroke-width="0.18">−4</text>
<line x1="437.3" y1="672.0" x2="440.8" y2="672.0" stroke="#222" stroke-width="1"/>
<text x="431.8" y="675.6" font-family="'Liberation Sans', sans-serif" font-size="10.3" text-anchor="end" textLength="13.6" lengthAdjust="spacingAndGlyphs" stroke="#000" stroke-width="0.18">−4</text>
<line x1="482.0" y1="680.5" x2="482.0" y2="684.0" stroke="#222" stroke-width="1"/>
<text x="481.8" y="695.7" font-family="'Liberation Sans', sans-serif" font-size="10.3" text-anchor="middle" textLength="13.6" lengthAdjust="spacingAndGlyphs" stroke="#000" stroke-width="0.18">−2</text>
<line x1="437.3" y1="639.3" x2="440.8" y2="639.3" stroke="#222" stroke-width="1"/>
<text x="431.8" y="642.9" font-family="'Liberation Sans', sans-serif" font-size="10.3" text-anchor="end" textLength="13.6" lengthAdjust="spacingAndGlyphs" stroke="#000" stroke-width="0.18">−2</text>
<line x1="514.7" y1="680.5" x2="514.7" y2="684.0" stroke="#222" stroke-width="1"/>
<text x="514.7" y="695.7" font-family="'Liberation Sans', sans-serif" font-size="10.3" text-anchor="middle" textLength="5.6" lengthAdjust="spacingAndGlyphs" stroke="#000" stroke-width="0.18">0</text>
<line x1="437.3" y1="606.6" x2="440.8" y2="606.6" stroke="#222" stroke-width="1"/>
<text x="431.8" y="610.2" font-family="'Liberation Sans', sans-serif" font-size="10.3" text-anchor="end" textLength="5.6" lengthAdjust="spacingAndGlyphs" stroke="#000" stroke-width="0.18">0</text>
<line x1="547.4" y1="680.5" x2="547.4" y2="684.0" stroke="#222" stroke-width="1"/>
<text x="547.4" y="695.7" font-family="'Liberation Sans', sans-serif" font-size="10.3" text-anchor="middle" textLength="5.6" lengthAdjust="spacingAndGlyphs" stroke="#000" stroke-width="0.18">2</text>
<line x1="437.3" y1="573.9" x2="440.8" y2="573.9" stroke="#222" stroke-width="1"/>
<text x="431.8" y="577.5" font-family="'Liberation Sans', sans-serif" font-size="10.3" text-anchor="end" textLength="5.6" lengthAdjust="spacingAndGlyphs" stroke="#000" stroke-width="0.18">2</text>
<line x1="580.1" y1="680.5" x2="580.1" y2="684.0" stroke="#222" stroke-width="1"/>
<text x="580.1" y="695.7" font-family="'Liberation Sans', sans-serif" font-size="10.3" text-anchor="middle" textLength="5.6" lengthAdjust="spacingAndGlyphs" stroke="#000" stroke-width="0.18">4</text>
<line x1="437.3" y1="541.2" x2="440.8" y2="541.2" stroke="#222" stroke-width="1"/>
<text x="431.8" y="544.8" font-family="'Liberation Sans', sans-serif" font-size="10.3" text-anchor="end" textLength="5.6" lengthAdjust="spacingAndGlyphs" stroke="#000" stroke-width="0.18">4</text>
<rect x="440.8" y="532.7" width="147.8" height="147.79999999999995" fill="none" stroke="#222" stroke-width="1.1"/>
<text x="514.7" y="525.8" font-family="'Liberation Sans', sans-serif" font-size="12.6" text-anchor="middle" textLength="76.2" lengthAdjust="spacingAndGlyphs" stroke="#000" stroke-width="0.18">HSC(26.2) r</text>
<text x="514.1" y="706.4" font-family="'Liberation Sans', sans-serif" font-size="10.3" text-anchor="middle" textLength="119" lengthAdjust="spacingAndGlyphs" stroke="#000" stroke-width="0.18">m:17.1  re:2.4"  s:3.5"</text>
<text x="516.1" y="718.6" font-family="'Liberation Sans', sans-serif" font-size="10.3" text-anchor="middle" textLength="99.8" lengthAdjust="spacingAndGlyphs" stroke="#000" stroke-width="0.18">EWr: 0, PLAE: 0.18</text>
</svg></body></html>
